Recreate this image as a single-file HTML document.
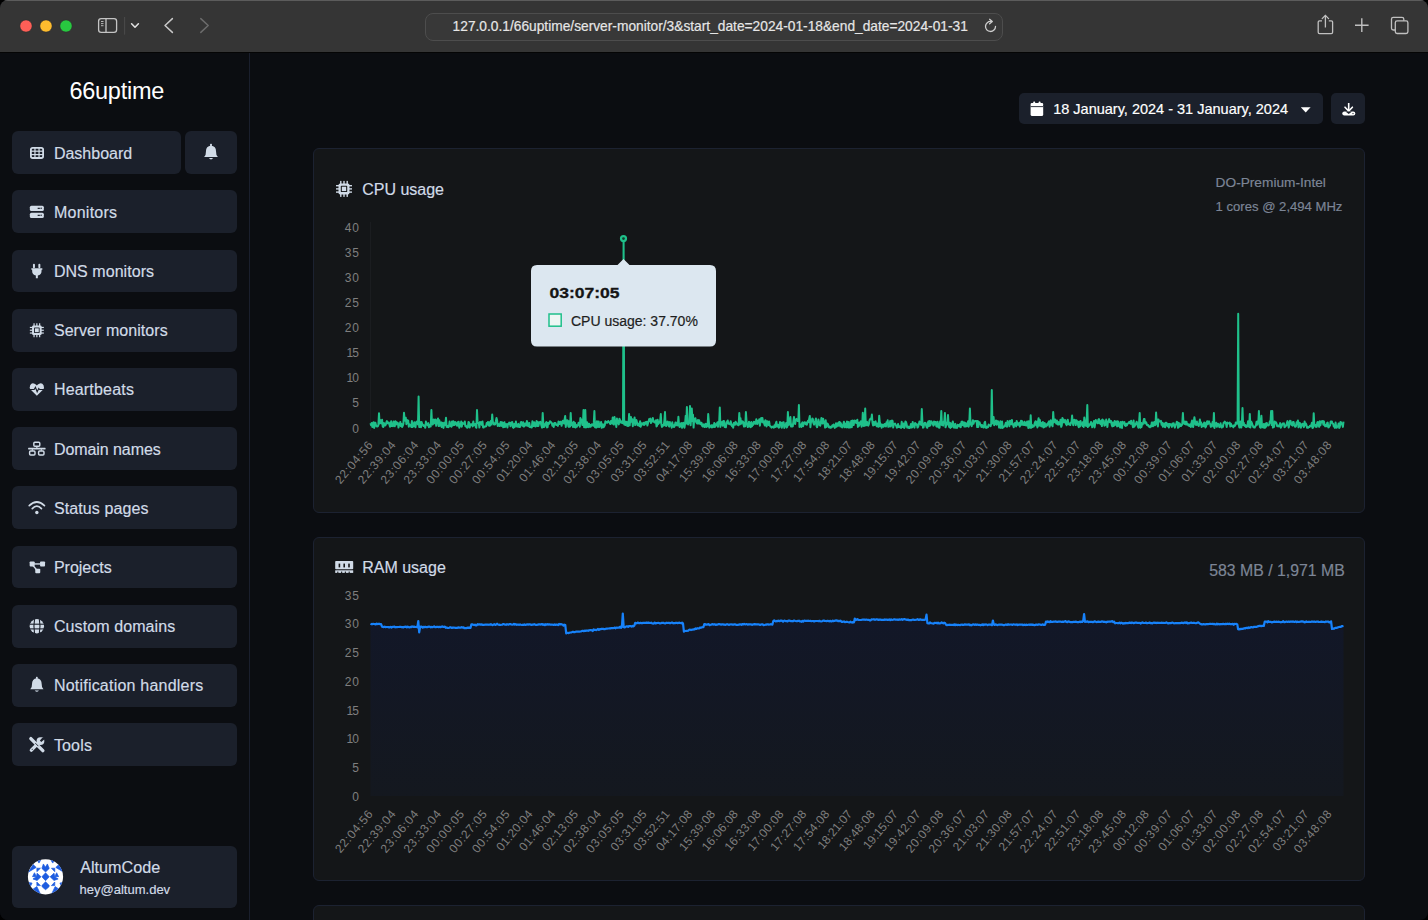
<!DOCTYPE html>
<html><head><meta charset="utf-8"><style>
*{margin:0;padding:0;box-sizing:border-box}
html,body{width:1428px;height:920px;overflow:hidden;background:#000}
body{font-family:"Liberation Sans", sans-serif;position:relative}
#win{position:absolute;left:0;top:0;width:1428px;height:920px;border-radius:8px;overflow:hidden;background:#0b0d11}
#tb{position:absolute;left:0;top:0;width:1428px;height:52px;background:#353535;border-top:1px solid #5c5c5c;border-bottom:1px solid #050505;height:53px}
#url{position:absolute;left:425px;top:12px;width:578px;height:28px;border:1px solid #4d4d4d;border-radius:8px;background:#383838}
#url span{position:absolute;left:28px;top:5px;font-size:13.75px;color:#e6e6e6;white-space:nowrap;letter-spacing:0px}
#sb{position:absolute;left:0;top:53px;width:250px;height:867px;border-right:1px solid #1a1f2d;background:#0b0d11}
.logo{position:absolute;left:69px;top:75px;font-size:22.6px;color:#fff;white-space:nowrap;letter-spacing:0px}
.nav{position:absolute;left:12px;height:42.75px;background:#1b202b;border-radius:6px}
.nt{position:absolute;left:42.5px;top:12.3px;font-size:16px;color:#d1dbe7;white-space:nowrap}
.card{position:absolute;left:313px;width:1052px;background:#141618;border:1px solid #1c2231;border-radius:6px}
.ttl{position:absolute;font-size:16px;color:#d1dbe7;white-space:nowrap}
.info{position:absolute;font-size:13.3px;color:#7c8596;white-space:nowrap}
.btn{position:absolute;top:93px;height:31px;background:#1b202b;border-radius:5px}
svg{position:absolute;left:0;top:0}
</style></head><body>
<div id="win">
<div id="tb"><div id="url"></div></div>
<div id="sb"></div>
<div class="nav" style="top:131.25px;width:169px"></div>
<div class="nav" style="top:131.25px;left:185px;width:52px"></div>
<div class="nav" style="top:190.45px;width:225px"></div>
<div class="nav" style="top:249.65px;width:225px"></div>
<div class="nav" style="top:308.85px;width:225px"></div>
<div class="nav" style="top:368.05px;width:225px"></div>
<div class="nav" style="top:427.25px;width:225px"></div>
<div class="nav" style="top:486.45px;width:225px"></div>
<div class="nav" style="top:545.65px;width:225px"></div>
<div class="nav" style="top:604.85px;width:225px"></div>
<div class="nav" style="top:664.05px;width:225px"></div>
<div class="nav" style="top:723.25px;width:225px"></div>

<div class="nav" style="top:846px;height:62px;width:225px"></div>
<div class="btn" style="left:1019px;width:304px"></div>
<div class="btn" style="left:1331px;width:34px"></div>
<div class="card" style="top:148px;height:365px"></div>
<div class="card" style="top:537px;height:344px"></div>
<div class="card" style="top:905px;height:100px"></div>

<svg width="1428" height="920" viewBox="0 0 1428 920">
<!-- traffic lights -->
<circle cx="26" cy="26" r="6.1" fill="#fe5f57" stroke="#2a2a2a" stroke-width="0.5"/><circle cx="46" cy="26" r="6.1" fill="#febc2e" stroke="#2a2a2a" stroke-width="0.5"/><circle cx="66" cy="26" r="6.1" fill="#28c840" stroke="#2a2a2a" stroke-width="0.5"/>
<!-- sidebar toggle -->
<rect x="98.6" y="18.6" width="18" height="13.8" rx="2.6" fill="none" stroke="#c4c4c4" stroke-width="1.3"/>
<line x1="106" y1="18.6" x2="106" y2="32.4" stroke="#c4c4c4" stroke-width="1.3"/>
<line x1="101" y1="21.5" x2="103.5" y2="21.5" stroke="#c4c4c4" stroke-width="0.9"/>
<line x1="101" y1="23.6" x2="103.5" y2="23.6" stroke="#c4c4c4" stroke-width="0.9"/>
<line x1="101" y1="25.7" x2="103.5" y2="25.7" stroke="#c4c4c4" stroke-width="0.9"/>
<line x1="124.6" y1="17" x2="124.6" y2="34.7" stroke="#4a4a4a" stroke-width="1"/>
<path d="M131.6 23.8 L135 27.2 L138.4 23.8" fill="none" stroke="#e0e0e0" stroke-width="1.6" stroke-linecap="round" stroke-linejoin="round"/>
<path d="M172.4 18.6 L165 25.5 L172.4 32.4" fill="none" stroke="#c8c8c8" stroke-width="1.5" stroke-linecap="round" stroke-linejoin="round"/>
<path d="M200.8 18.6 L208.2 25.5 L200.8 32.4" fill="none" stroke="#6b6b6b" stroke-width="1.5" stroke-linecap="round" stroke-linejoin="round"/>
<!-- reload -->
<path d="M995.5 26.5 A5 5 0 1 1 991 21.5" fill="none" stroke="#cfcfcf" stroke-width="1.3" stroke-linecap="round"/>
<path d="M989.6 19.3 L992.3 21.5 L989.6 23.8" fill="none" stroke="#cfcfcf" stroke-width="1.3" stroke-linecap="round" stroke-linejoin="round"/>
<!-- share -->
<path d="M1322 20.8 H1319.5 Q1318.2 20.8 1318.2 22.1 V32.3 Q1318.2 33.6 1319.5 33.6 H1331.3 Q1332.6 33.6 1332.6 32.3 V22.1 Q1332.6 20.8 1331.3 20.8 H1328.8" fill="none" stroke="#c0c0c0" stroke-width="1.3"/>
<line x1="1325.4" y1="15.6" x2="1325.4" y2="27.6" stroke="#c0c0c0" stroke-width="1.3"/>
<path d="M1322.2 18.6 L1325.4 15.4 L1328.6 18.6" fill="none" stroke="#c0c0c0" stroke-width="1.3" stroke-linecap="round"/>
<!-- plus -->
<line x1="1355" y1="25.2" x2="1368.6" y2="25.2" stroke="#c0c0c0" stroke-width="1.4"/>
<line x1="1361.8" y1="18.2" x2="1361.8" y2="32" stroke="#c0c0c0" stroke-width="1.4"/>
<!-- tabs -->
<path d="M1395.3 30 H1393.3 Q1391.5 30 1391.5 28.2 V19 Q1391.5 17.3 1393.3 17.3 H1402 Q1403.8 17.3 1403.8 19 V20.8" fill="none" stroke="#c0c0c0" stroke-width="1.3"/>
<rect x="1395.3" y="20.9" width="12.6" height="12.6" rx="1.8" fill="none" stroke="#c0c0c0" stroke-width="1.3"/>

<!-- sidebar icons -->
<rect x="30.9" y="147.8" width="12.2" height="10.2" rx="1.8" fill="none" stroke="#d1dbe7" stroke-width="1.8"/><rect x="34.37" y="147.9" width="1.2" height="10" fill="#d1dbe7"/><rect x="31" y="150.60000000000002" width="12" height="1.2" fill="#d1dbe7"/><rect x="38.44" y="147.9" width="1.2" height="10" fill="#d1dbe7"/><rect x="31" y="154.00000000000003" width="12" height="1.2" fill="#d1dbe7"/>
<path d="M204.1 156.97 Q206.17 154.9 205.94 151.45 Q205.94 146.16 211 145.47 Q216.06 146.16 216.06 151.45 Q215.83 154.9 217.9 156.97 Z" fill="#d1dbe7"/><rect x="210.08" y="143.85999999999999" width="1.8399999999999999" height="2.3" rx="0.69" fill="#d1dbe7"/><path d="M208.815 158.12 Q211 161.10999999999999 213.185 158.12 Z" fill="#d1dbe7"/>
<rect x="29.85" y="205.65" width="14" height="5.4" rx="1.6" fill="#d1dbe7"/><rect x="29.85" y="212.65" width="14" height="5.4" rx="1.6" fill="#d1dbe7"/><circle cx="41.150000000000006" cy="208.35" r="0.75" fill="#1b202b"/><rect x="37.65" y="207.75" width="2.2" height="1.2" fill="#1b202b"/><circle cx="41.150000000000006" cy="215.35" r="0.75" fill="#1b202b"/><rect x="37.65" y="214.75" width="2.2" height="1.2" fill="#1b202b"/><rect x="32.95" y="263.85" width="2" height="4.5" rx="1" fill="#d1dbe7"/><rect x="38.35" y="263.85" width="2" height="4.5" rx="1" fill="#d1dbe7"/><path d="M31.35 268.15000000000003 H42.35 V269.75 H41.55 V271.05 Q41.55 274.85 37.85 275.45000000000005 V278.35 H35.85 V275.45000000000005 Q32.15 274.85 32.15 271.05 V269.75 H31.35 Z" fill="#d1dbe7"/><rect x="32.050000000000004" y="325.45" width="9.6" height="9.6" rx="1.4" fill="#d1dbe7"/><rect x="34.050000000000004" y="327.45" width="5.6" height="5.6" rx="0.6" fill="#1b202b"/><rect x="34.95" y="328.35" width="3.8" height="3.8" fill="#d1dbe7"/><rect x="33.45" y="323.25" width="1.2" height="14.0" fill="#d1dbe7"/><rect x="29.85" y="326.85" width="14.0" height="1.2" fill="#d1dbe7"/><rect x="36.25" y="323.25" width="1.2" height="14.0" fill="#d1dbe7"/><rect x="29.85" y="329.65" width="14.0" height="1.2" fill="#d1dbe7"/><rect x="39.050000000000004" y="323.25" width="1.2" height="14.0" fill="#d1dbe7"/><rect x="29.85" y="332.45" width="14.0" height="1.2" fill="#d1dbe7"/><rect x="34.050000000000004" y="327.45" width="5.6" height="5.6" rx="0.6" fill="#1b202b"/><rect x="34.95" y="328.35" width="3.8" height="3.8" fill="#d1dbe7"/><path d="M36.85 395.75 L30.75 389.75 Q28.95 387.65 30.150000000000002 385.15 Q31.75 382.54999999999995 34.55 383.75 Q35.95 384.34999999999997 36.85 385.54999999999995 Q37.75 384.34999999999997 39.15 383.75 Q41.95 382.54999999999995 43.55 385.15 Q44.75 387.65 42.95 389.75 Z" fill="#d1dbe7"/><path d="M29.55 389.54999999999995 H34.15 L35.45 387.34999999999997 L37.15 391.75 L38.75 388.45 L39.65 389.54999999999995 H44.55" fill="none" stroke="#1b202b" stroke-width="1.1" stroke-linejoin="miter"/><rect x="33.83" y="442.27" width="5.95" height="4.05" rx="1" fill="none" stroke="#d1dbe7" stroke-width="1.45"/><rect x="29.63" y="451.07" width="5.35" height="3.95" rx="1" fill="none" stroke="#d1dbe7" stroke-width="1.45"/><rect x="38.62" y="451.07" width="5.35" height="3.95" rx="1" fill="none" stroke="#d1dbe7" stroke-width="1.45"/><rect x="28.1" y="447.79999999999995" width="17.5" height="1.7" rx="0.4" fill="#d1dbe7"/><rect x="36.25" y="446.65" width="1.2" height="1.5" fill="#d1dbe7"/><rect x="31.75" y="449.15" width="1.2" height="1.5" fill="#d1dbe7"/><rect x="40.75" y="449.15" width="1.2" height="1.5" fill="#d1dbe7"/><path d="M29.25 505.55 Q36.85 498.45000000000005 44.45 505.55" fill="none" stroke="#d1dbe7" stroke-width="1.7" stroke-linecap="round"/><path d="M32.25 508.55 Q36.85 503.65000000000003 41.45 508.55" fill="none" stroke="#d1dbe7" stroke-width="1.7" stroke-linecap="round"/><circle cx="36.85" cy="512.45" r="1.7" fill="#d1dbe7"/><rect x="29.650000000000002" y="561.45" width="5" height="5" rx="0.9" fill="#d1dbe7"/><rect x="40.05" y="561.45" width="5" height="5" rx="0.9" fill="#d1dbe7"/><rect x="35.25" y="568.65" width="5" height="4.6" rx="0.9" fill="#d1dbe7"/><rect x="33.85" y="563.25" width="7" height="1.4" fill="#d1dbe7"/><path d="M33.050000000000004 565.45 L36.45 569.65" stroke="#d1dbe7" stroke-width="1.4"/><circle cx="36.85" cy="626.25" r="7.2" fill="#d1dbe7"/><rect x="29.35" y="623.65" width="15" height="1.1" fill="#1b202b"/><rect x="29.35" y="628.35" width="15" height="1.1" fill="#1b202b"/><path d="M34.550000000000004 619.05 Q33.25 626.25 34.550000000000004 633.45" fill="none" stroke="#1b202b" stroke-width="1.1"/><path d="M39.35 619.05 Q40.65 626.25 39.35 633.45" fill="none" stroke="#1b202b" stroke-width="1.1"/><path d="M30.25 689.33 Q32.230000000000004 687.3500000000001 32.01 684.0500000000001 Q32.01 678.9900000000001 36.85 678.33 Q41.690000000000005 678.9900000000001 41.690000000000005 684.0500000000001 Q41.47 687.3500000000001 43.45 689.33 Z" fill="#d1dbe7"/><rect x="35.97" y="676.7900000000001" width="1.7600000000000002" height="2.2" rx="0.66" fill="#d1dbe7"/><path d="M34.760000000000005 690.4300000000001 Q36.85 693.2900000000001 38.94 690.4300000000001 Z" fill="#d1dbe7"/><path d="M30.85 738.65 L42.85 750.65" stroke="#d1dbe7" stroke-width="3.4" stroke-linecap="round"/><path d="M42.35 739.15 L31.35 750.15" stroke="#d1dbe7" stroke-width="3.4" stroke-linecap="round"/><circle cx="40.45" cy="741.05" r="3.9" fill="#d1dbe7"/><path d="M39.85 740.4499999999999 L43.050000000000004 737.05 L44.85 739.05 L41.25 742.05 Z" fill="#1b202b"/><path d="M35.35 743.15 L38.35 746.15" stroke="#1b202b" stroke-width="0.9"/><circle cx="32.25" cy="749.25" r="0.6" fill="#1b202b"/>
<defs><clipPath id="av"><circle cx="45.5" cy="876.8" r="17.6"/></clipPath></defs><circle cx="45.5" cy="876.8" r="17.6" fill="#ffffff"/><g clip-path="url(#av)" fill="#1d5ce0" stroke="#1d5ce0" stroke-width="0.7" stroke-linejoin="round"><polygon points="45.57,872.87 49.26,876.78 45.57,880.70 41.87,876.78"/><polygon points="41.87,868.39 43.39,863.96 45.35,867.22 47.39,863.96 49.26,868.39 45.57,872.00"/><polygon points="45.57,881.87 49.26,885.48 48.83,887.00 45.57,889.70 42.30,887.00 41.87,885.48"/><polygon points="37.09,873.17 41.00,876.78 37.09,880.48 32.96,878.96 36.43,876.78"/><polygon points="34.48,872.74 36.43,876.65 32.52,876.65"/><polygon points="54.04,873.17 50.13,876.78 54.04,880.48 58.17,878.96 54.70,876.78"/><polygon points="56.65,872.74 54.70,876.65 58.61,876.65"/><polygon points="36.87,868.22 40.43,868.22 36.87,871.70"/><polygon points="51.43,868.22 54.78,868.22 54.78,871.70"/><polygon points="36.87,882.00 36.87,885.61 40.43,885.61"/><polygon points="54.78,882.00 54.78,885.61 51.43,885.61"/><polygon points="37.39,860.26 40.57,860.26 38.96,863.09"/><polygon points="51.00,860.26 54.35,860.26 52.74,863.09"/><polygon points="28.17,872.22 33.17,864.61 36.22,867.43"/><polygon points="63.83,872.22 58.83,864.61 55.78,867.43"/><polygon points="27.74,882.43 32.09,883.09 30.13,887.00"/><polygon points="64.26,882.43 59.91,883.09 61.87,887.00"/><polygon points="32.96,889.17 36.87,886.57 40.57,894.39"/><polygon points="59.04,889.17 55.13,886.57 51.43,894.39"/></g>

<!-- date button icons -->
<rect x="1030.6" y="104.3" width="12.6" height="11.8" rx="1.6" fill="#fff"/>
<rect x="1030.6" y="103" width="12.6" height="3" rx="1.2" fill="#fff"/>
<rect x="1033.3" y="101.6" width="1.8" height="3" rx="0.6" fill="#fff"/>
<rect x="1038.7" y="101.6" width="1.8" height="3" rx="0.6" fill="#fff"/>
<rect x="1030.6" y="106.2" width="12.6" height="0.9" fill="#1b202b"/>
<path d="M1300.8 107.2 H1310.6 L1305.7 112.6 Z" fill="#fff"/>
<!-- download -->
<line x1="1348.7" y1="103" x2="1348.7" y2="110.5" stroke="#fff" stroke-width="1.6"/>
<path d="M1345 107.2 L1348.7 111 L1352.4 107.2" fill="none" stroke="#fff" stroke-width="1.6" stroke-linecap="round"/>
<rect x="1342.3" y="111.6" width="13" height="4" rx="2" fill="#fff"/>
<path d="M1345.5 111.6 L1348.7 114 L1351.9 111.6 Z" fill="#1b202b"/>
<circle cx="1353" cy="113.6" r="0.7" fill="#1b202b"/>

<!-- CPU icon -->
<rect x="338.51428571428573" y="183.4142857142857" width="10.97142857142857" height="10.97142857142857" rx="1.5999999999999999" fill="#d1dbe7"/><rect x="340.8" y="185.70000000000002" width="6.3999999999999995" height="6.3999999999999995" rx="0.6857142857142856" fill="#141618"/><rect x="341.8285714285714" y="186.72857142857143" width="4.3428571428571425" height="4.3428571428571425" fill="#d1dbe7"/><rect x="340.1142857142857" y="180.9" width="1.3714285714285712" height="16.0" fill="#d1dbe7"/><rect x="336.0" y="185.01428571428573" width="16.0" height="1.3714285714285712" fill="#d1dbe7"/><rect x="343.3142857142857" y="180.9" width="1.3714285714285712" height="16.0" fill="#d1dbe7"/><rect x="336.0" y="188.21428571428572" width="16.0" height="1.3714285714285712" fill="#d1dbe7"/><rect x="346.51428571428573" y="180.9" width="1.3714285714285712" height="16.0" fill="#d1dbe7"/><rect x="336.0" y="191.4142857142857" width="16.0" height="1.3714285714285712" fill="#d1dbe7"/><rect x="340.8" y="185.70000000000002" width="6.3999999999999995" height="6.3999999999999995" rx="0.6857142857142856" fill="#141618"/><rect x="341.8285714285714" y="186.72857142857143" width="4.3428571428571425" height="4.3428571428571425" fill="#d1dbe7"/>
<!-- RAM icon -->
<g fill="#d1dbe7">
<rect x="335.2" y="561" width="18" height="8.2" rx="0.8"/>
<rect x="335.2" y="570.3" width="18" height="2.6"/>
</g>
<g fill="#141618">
<rect x="338.6" y="563.6" width="1.6" height="3.8"/><rect x="343.4" y="563.6" width="1.6" height="3.8"/><rect x="348.2" y="563.6" width="1.6" height="3.8"/>
<rect x="337.2" y="571.6" width="1.2" height="1.3"/><rect x="341" y="571.6" width="1.2" height="1.3"/><rect x="344.8" y="571.6" width="1.2" height="1.3"/><rect x="348.6" y="571.6" width="1.2" height="1.3"/>
</g>

<!-- CPU chart -->
<line x1="370.5" y1="222" x2="370.5" y2="431" stroke="#1b1d20" stroke-width="1"/>
<g font-family='"Liberation Sans", sans-serif' font-size="12" fill="#7f7f7f">
<text x="358.9" y="432.50" text-anchor="end">0</text><text x="358.9" y="407.40" text-anchor="end">5</text><text x="358.9" y="382.30" text-anchor="end" textLength="12.4" lengthAdjust="spacing">10</text><text x="358.9" y="357.20" text-anchor="end" textLength="12.4" lengthAdjust="spacing">15</text><text x="358.9" y="332.10" text-anchor="end" textLength="14.1" lengthAdjust="spacing">20</text><text x="358.9" y="307.00" text-anchor="end" textLength="14.1" lengthAdjust="spacing">25</text><text x="358.9" y="281.90" text-anchor="end" textLength="14.1" lengthAdjust="spacing">30</text><text x="358.9" y="256.80" text-anchor="end" textLength="14.1" lengthAdjust="spacing">35</text><text x="358.9" y="231.70" text-anchor="end" textLength="14.1" lengthAdjust="spacing">40</text>
<text x="373.40" y="445.40" transform="rotate(-50 373.40 445.40)" text-anchor="end" textLength="51.3" lengthAdjust="spacing">22:04:56</text><text x="396.23" y="445.40" transform="rotate(-50 396.23 445.40)" text-anchor="end" textLength="51.3" lengthAdjust="spacing">22:39:04</text><text x="419.06" y="445.40" transform="rotate(-50 419.06 445.40)" text-anchor="end" textLength="51.3" lengthAdjust="spacing">23:06:04</text><text x="441.89" y="445.40" transform="rotate(-50 441.89 445.40)" text-anchor="end" textLength="51.3" lengthAdjust="spacing">23:33:04</text><text x="464.72" y="445.40" transform="rotate(-50 464.72 445.40)" text-anchor="end" textLength="51.3" lengthAdjust="spacing">00:00:05</text><text x="487.55" y="445.40" transform="rotate(-50 487.55 445.40)" text-anchor="end" textLength="51.3" lengthAdjust="spacing">00:27:05</text><text x="510.38" y="445.40" transform="rotate(-50 510.38 445.40)" text-anchor="end" textLength="51.3" lengthAdjust="spacing">00:54:05</text><text x="533.21" y="445.40" transform="rotate(-50 533.21 445.40)" text-anchor="end" textLength="48.9" lengthAdjust="spacing">01:20:04</text><text x="556.04" y="445.40" transform="rotate(-50 556.04 445.40)" text-anchor="end" textLength="48.9" lengthAdjust="spacing">01:46:04</text><text x="578.87" y="445.40" transform="rotate(-50 578.87 445.40)" text-anchor="end" textLength="48.9" lengthAdjust="spacing">02:13:05</text><text x="601.70" y="445.40" transform="rotate(-50 601.70 445.40)" text-anchor="end" textLength="51.3" lengthAdjust="spacing">02:38:04</text><text x="624.53" y="445.40" transform="rotate(-50 624.53 445.40)" text-anchor="end" textLength="51.3" lengthAdjust="spacing">03:05:05</text><text x="647.36" y="445.40" transform="rotate(-50 647.36 445.40)" text-anchor="end" textLength="48.9" lengthAdjust="spacing">03:31:05</text><text x="670.19" y="445.40" transform="rotate(-50 670.19 445.40)" text-anchor="end" textLength="48.9" lengthAdjust="spacing">03:52:51</text><text x="693.02" y="445.40" transform="rotate(-50 693.02 445.40)" text-anchor="end" textLength="48.9" lengthAdjust="spacing">04:17:08</text><text x="715.85" y="445.40" transform="rotate(-50 715.85 445.40)" text-anchor="end" textLength="48.9" lengthAdjust="spacing">15:39:08</text><text x="738.68" y="445.40" transform="rotate(-50 738.68 445.40)" text-anchor="end" textLength="48.9" lengthAdjust="spacing">16:06:08</text><text x="761.51" y="445.40" transform="rotate(-50 761.51 445.40)" text-anchor="end" textLength="48.9" lengthAdjust="spacing">16:33:08</text><text x="784.34" y="445.40" transform="rotate(-50 784.34 445.40)" text-anchor="end" textLength="48.9" lengthAdjust="spacing">17:00:08</text><text x="807.17" y="445.40" transform="rotate(-50 807.17 445.40)" text-anchor="end" textLength="48.9" lengthAdjust="spacing">17:27:08</text><text x="830.00" y="445.40" transform="rotate(-50 830.00 445.40)" text-anchor="end" textLength="48.9" lengthAdjust="spacing">17:54:08</text><text x="852.83" y="445.40" transform="rotate(-50 852.83 445.40)" text-anchor="end" textLength="46.5" lengthAdjust="spacing">18:21:07</text><text x="875.66" y="445.40" transform="rotate(-50 875.66 445.40)" text-anchor="end" textLength="48.9" lengthAdjust="spacing">18:48:08</text><text x="898.49" y="445.40" transform="rotate(-50 898.49 445.40)" text-anchor="end" textLength="46.5" lengthAdjust="spacing">19:15:07</text><text x="921.32" y="445.40" transform="rotate(-50 921.32 445.40)" text-anchor="end" textLength="48.9" lengthAdjust="spacing">19:42:07</text><text x="944.15" y="445.40" transform="rotate(-50 944.15 445.40)" text-anchor="end" textLength="51.3" lengthAdjust="spacing">20:09:08</text><text x="966.98" y="445.40" transform="rotate(-50 966.98 445.40)" text-anchor="end" textLength="51.3" lengthAdjust="spacing">20:36:07</text><text x="989.81" y="445.40" transform="rotate(-50 989.81 445.40)" text-anchor="end" textLength="48.9" lengthAdjust="spacing">21:03:07</text><text x="1012.64" y="445.40" transform="rotate(-50 1012.64 445.40)" text-anchor="end" textLength="48.9" lengthAdjust="spacing">21:30:08</text><text x="1035.47" y="445.40" transform="rotate(-50 1035.47 445.40)" text-anchor="end" textLength="48.9" lengthAdjust="spacing">21:57:07</text><text x="1058.30" y="445.40" transform="rotate(-50 1058.30 445.40)" text-anchor="end" textLength="51.3" lengthAdjust="spacing">22:24:07</text><text x="1081.13" y="445.40" transform="rotate(-50 1081.13 445.40)" text-anchor="end" textLength="48.9" lengthAdjust="spacing">22:51:07</text><text x="1103.96" y="445.40" transform="rotate(-50 1103.96 445.40)" text-anchor="end" textLength="48.9" lengthAdjust="spacing">23:18:08</text><text x="1126.79" y="445.40" transform="rotate(-50 1126.79 445.40)" text-anchor="end" textLength="51.3" lengthAdjust="spacing">23:45:08</text><text x="1149.62" y="445.40" transform="rotate(-50 1149.62 445.40)" text-anchor="end" textLength="48.9" lengthAdjust="spacing">00:12:08</text><text x="1172.45" y="445.40" transform="rotate(-50 1172.45 445.40)" text-anchor="end" textLength="51.3" lengthAdjust="spacing">00:39:07</text><text x="1195.28" y="445.40" transform="rotate(-50 1195.28 445.40)" text-anchor="end" textLength="48.9" lengthAdjust="spacing">01:06:07</text><text x="1218.11" y="445.40" transform="rotate(-50 1218.11 445.40)" text-anchor="end" textLength="48.9" lengthAdjust="spacing">01:33:07</text><text x="1240.94" y="445.40" transform="rotate(-50 1240.94 445.40)" text-anchor="end" textLength="51.3" lengthAdjust="spacing">02:00:08</text><text x="1263.77" y="445.40" transform="rotate(-50 1263.77 445.40)" text-anchor="end" textLength="51.3" lengthAdjust="spacing">02:27:08</text><text x="1286.60" y="445.40" transform="rotate(-50 1286.60 445.40)" text-anchor="end" textLength="51.3" lengthAdjust="spacing">02:54:07</text><text x="1309.43" y="445.40" transform="rotate(-50 1309.43 445.40)" text-anchor="end" textLength="48.9" lengthAdjust="spacing">03:21:07</text><text x="1332.26" y="445.40" transform="rotate(-50 1332.26 445.40)" text-anchor="end" textLength="51.3" lengthAdjust="spacing">03:48:08</text>
</g>
<path d="M370.5 423.2 L371.1 425.2 L371.7 423.0 L372.3 426.9 L372.9 426.4 L373.5 422.2 L374.2 427.9 L374.8 422.7 L375.4 422.8 L376.0 425.3 L376.6 426.4 L377.2 426.6 L377.8 426.4 L378.4 424.9 L379.0 413.3 L379.6 423.5 L380.2 420.1 L380.8 421.1 L381.5 423.6 L382.1 419.8 L382.7 426.3 L383.3 427.0 L383.9 422.9 L384.5 425.6 L385.1 425.5 L385.7 424.9 L386.3 422.5 L386.9 421.1 L387.5 423.3 L388.1 422.6 L388.8 422.4 L389.4 424.4 L390.0 426.8 L390.6 425.6 L391.2 421.2 L391.8 426.1 L392.4 424.0 L393.0 426.2 L393.6 421.6 L394.2 425.7 L394.8 426.1 L395.4 421.2 L396.1 424.4 L396.7 422.2 L397.3 423.8 L397.9 423.1 L398.5 427.5 L399.1 424.8 L399.7 424.9 L400.3 422.0 L400.9 426.0 L401.5 423.9 L402.1 427.1 L402.8 425.6 L403.4 423.6 L404.0 412.8 L404.6 418.8 L405.2 420.6 L405.8 417.8 L406.4 424.2 L407.0 420.1 L407.6 421.1 L408.2 420.6 L408.8 426.7 L409.4 424.1 L410.1 425.4 L410.7 425.2 L411.3 427.0 L411.9 421.0 L412.5 427.0 L413.1 423.6 L413.7 426.2 L414.3 422.2 L414.9 423.5 L415.5 427.3 L416.1 422.3 L416.7 421.6 L417.4 422.0 L418.0 424.6 L418.6 396.6 L419.2 427.1 L419.8 421.8 L420.4 424.7 L421.0 427.2 L421.6 422.1 L422.2 424.1 L422.8 424.5 L423.4 425.9 L424.0 425.4 L424.7 426.6 L425.3 427.7 L425.9 421.6 L426.5 424.6 L427.1 424.1 L427.7 425.3 L428.3 423.1 L428.9 427.2 L429.5 424.9 L430.1 426.5 L430.7 426.5 L431.4 410.1 L432.0 423.4 L432.6 424.5 L433.2 423.6 L433.8 419.5 L434.4 423.3 L435.0 421.5 L435.6 419.6 L436.2 425.8 L436.8 420.8 L437.4 420.7 L438.0 418.5 L438.7 426.1 L439.3 420.2 L439.9 425.7 L440.5 423.1 L441.1 422.3 L441.7 427.0 L442.3 425.4 L442.9 422.7 L443.5 427.9 L444.1 424.2 L444.7 422.9 L445.3 425.0 L446.0 417.7 L446.6 426.9 L447.2 427.1 L447.8 426.0 L448.4 427.2 L449.0 426.2 L449.6 421.6 L450.2 424.6 L450.8 426.2 L451.4 426.6 L452.0 421.6 L452.6 425.5 L453.3 421.3 L453.9 425.0 L454.5 424.9 L455.1 422.0 L455.7 423.3 L456.3 424.5 L456.9 425.6 L457.5 422.2 L458.1 425.7 L458.7 421.8 L459.3 427.7 L460.0 425.6 L460.6 425.0 L461.2 421.6 L461.8 426.7 L462.4 422.8 L463.0 423.8 L463.6 423.5 L464.2 424.1 L464.8 421.4 L465.4 426.2 L466.0 425.8 L466.6 427.0 L467.3 427.8 L467.9 427.0 L468.5 421.9 L469.1 422.5 L469.7 427.5 L470.3 424.3 L470.9 425.2 L471.5 424.4 L472.1 423.9 L472.7 426.4 L473.3 421.5 L473.9 425.3 L474.6 424.2 L475.2 424.1 L475.8 427.1 L476.4 427.7 L477.0 410.1 L477.6 423.1 L478.2 422.7 L478.8 423.4 L479.4 427.5 L480.0 421.9 L480.6 422.8 L481.2 422.2 L481.9 424.9 L482.5 421.5 L483.1 427.5 L483.7 427.6 L484.3 426.5 L484.9 426.5 L485.5 426.6 L486.1 426.4 L486.7 423.0 L487.3 424.3 L487.9 422.0 L488.6 425.5 L489.2 422.2 L489.8 425.8 L490.4 424.5 L491.0 420.7 L491.6 424.6 L492.2 414.6 L492.8 421.9 L493.4 422.5 L494.0 424.6 L494.6 424.4 L495.2 424.4 L495.9 421.2 L496.5 417.9 L497.1 420.3 L497.7 426.0 L498.3 423.9 L498.9 424.8 L499.5 426.0 L500.1 423.9 L500.7 421.9 L501.3 425.9 L501.9 422.2 L502.5 422.8 L503.2 427.3 L503.8 423.1 L504.4 422.2 L505.0 427.1 L505.6 424.6 L506.2 424.1 L506.8 424.3 L507.4 427.6 L508.0 423.9 L508.6 424.1 L509.2 422.6 L509.8 422.8 L510.5 426.3 L511.1 423.4 L511.7 422.3 L512.3 422.1 L512.9 427.3 L513.5 427.9 L514.1 424.0 L514.7 427.0 L515.3 424.6 L515.9 421.6 L516.5 425.9 L517.1 426.7 L517.8 425.4 L518.4 423.9 L519.0 427.1 L519.6 425.2 L520.2 426.9 L520.8 422.2 L521.4 422.1 L522.0 424.7 L522.6 425.6 L523.2 422.3 L523.8 426.6 L524.5 426.1 L525.1 423.5 L525.7 423.7 L526.3 425.5 L526.9 421.0 L527.5 422.9 L528.1 426.0 L528.7 426.3 L529.3 422.9 L529.9 427.0 L530.5 426.7 L531.1 427.3 L531.8 427.5 L532.4 421.3 L533.0 426.0 L533.6 426.1 L534.2 422.2 L534.8 424.0 L535.4 426.6 L536.0 424.9 L536.6 421.0 L537.2 425.9 L537.8 422.1 L538.4 426.1 L539.1 423.0 L539.7 422.2 L540.3 421.9 L540.9 423.4 L541.5 425.9 L542.1 427.6 L542.7 413.1 L543.3 423.2 L543.9 427.1 L544.5 426.7 L545.1 424.8 L545.7 423.2 L546.4 422.0 L547.0 427.4 L547.6 427.1 L548.2 422.8 L548.8 424.0 L549.4 423.4 L550.0 421.2 L550.6 421.7 L551.2 422.5 L551.8 423.0 L552.4 425.8 L553.1 424.1 L553.7 427.1 L554.3 423.1 L554.9 423.2 L555.5 423.0 L556.1 424.9 L556.7 425.0 L557.3 424.5 L557.9 425.9 L558.5 421.4 L559.1 422.9 L559.7 423.9 L560.4 421.7 L561.0 422.4 L561.6 425.8 L562.2 422.1 L562.8 420.7 L563.4 420.9 L564.0 423.5 L564.6 419.4 L565.2 416.0 L565.8 426.9 L566.4 421.8 L567.0 420.2 L567.7 420.6 L568.3 426.1 L568.9 426.9 L569.5 421.0 L570.1 426.5 L570.7 413.1 L571.3 424.2 L571.9 425.3 L572.5 422.8 L573.1 427.0 L573.7 421.8 L574.3 426.9 L575.0 422.9 L575.6 427.5 L576.2 424.9 L576.8 426.8 L577.4 425.3 L578.0 425.0 L578.6 422.7 L579.2 423.3 L579.8 426.7 L580.4 418.1 L581.0 419.5 L581.7 420.2 L582.3 424.9 L582.9 424.8 L583.5 410.1 L584.1 427.3 L584.7 426.9 L585.3 410.1 L585.9 427.4 L586.5 427.2 L587.1 422.3 L587.7 425.2 L588.3 427.1 L589.0 423.8 L589.6 426.7 L590.2 424.9 L590.8 426.6 L591.4 425.0 L592.0 424.2 L592.6 424.8 L593.2 425.8 L593.8 422.9 L594.4 411.1 L595.0 427.2 L595.6 427.4 L596.3 427.5 L596.9 421.3 L597.5 421.7 L598.1 426.9 L598.7 421.4 L599.3 427.0 L599.9 425.1 L600.5 425.1 L601.1 421.9 L601.7 427.8 L602.3 426.3 L602.9 424.3 L603.6 427.3 L604.2 426.2 L604.8 425.2 L605.4 421.2 L606.0 422.7 L606.6 422.2 L607.2 422.6 L607.8 421.4 L608.4 421.1 L609.0 422.4 L609.6 422.7 L610.3 424.0 L610.9 421.1 L611.5 423.0 L612.1 423.4 L612.7 417.6 L613.3 424.1 L613.9 424.6 L614.5 417.1 L615.1 422.6 L615.7 421.3 L616.3 426.9 L616.9 418.5 L617.6 422.6 L618.2 422.0 L618.8 424.4 L619.4 418.8 L620.0 420.0 L620.6 422.5 L621.2 421.4 L621.8 422.9 L622.4 423.2 L623.0 422.4 L623.6 238.9 L624.2 424.6 L624.9 421.3 L625.5 425.0 L626.1 423.1 L626.7 421.7 L627.3 425.9 L627.9 423.0 L628.5 425.9 L629.1 414.0 L629.7 425.3 L630.3 419.8 L630.9 416.9 L631.5 421.8 L632.2 419.2 L632.8 426.2 L633.4 420.5 L634.0 420.4 L634.6 417.5 L635.2 425.1 L635.8 420.4 L636.4 420.1 L637.0 422.4 L637.6 425.3 L638.2 423.6 L638.9 424.7 L639.5 426.0 L640.1 421.2 L640.7 426.8 L641.3 424.8 L641.9 423.2 L642.5 423.4 L643.1 424.7 L643.7 422.8 L644.3 424.9 L644.9 424.1 L645.5 422.1 L646.2 423.4 L646.8 421.8 L647.4 425.5 L648.0 423.2 L648.6 421.4 L649.2 419.1 L649.8 421.0 L650.4 418.6 L651.0 423.0 L651.6 420.7 L652.2 421.5 L652.8 418.0 L653.5 421.6 L654.1 422.0 L654.7 422.5 L655.3 421.2 L655.9 420.2 L656.5 426.4 L657.1 425.8 L657.7 419.8 L658.3 424.1 L658.9 421.7 L659.5 422.7 L660.1 421.2 L660.8 414.1 L661.4 424.4 L662.0 426.9 L662.6 425.1 L663.2 425.7 L663.8 425.3 L664.4 420.5 L665.0 412.1 L665.6 425.5 L666.2 426.0 L666.8 424.5 L667.5 421.6 L668.1 422.1 L668.7 425.9 L669.3 426.6 L669.9 422.1 L670.5 425.1 L671.1 423.7 L671.7 427.7 L672.3 422.3 L672.9 426.4 L673.5 425.1 L674.1 427.1 L674.8 425.7 L675.4 422.6 L676.0 422.6 L676.6 425.3 L677.2 423.1 L677.8 425.4 L678.4 416.7 L679.0 424.8 L679.6 427.0 L680.2 426.3 L680.8 423.6 L681.4 423.1 L682.1 427.8 L682.7 423.4 L683.3 422.7 L683.9 425.5 L684.5 427.7 L685.1 423.7 L685.7 415.8 L686.3 423.4 L686.9 407.1 L687.5 422.2 L688.1 424.5 L688.7 422.8 L689.4 422.0 L690.0 406.1 L690.6 425.3 L691.2 417.1 L691.8 408.6 L692.4 420.9 L693.0 414.8 L693.6 427.6 L694.2 418.7 L694.8 420.1 L695.4 418.3 L696.1 422.0 L696.7 422.8 L697.3 423.5 L697.9 420.1 L698.5 423.5 L699.1 420.2 L699.7 422.6 L700.3 424.2 L700.9 422.8 L701.5 422.8 L702.1 425.9 L702.7 426.5 L703.4 424.4 L704.0 425.1 L704.6 427.1 L705.2 424.3 L705.8 423.7 L706.4 427.0 L707.0 426.2 L707.6 426.3 L708.2 414.1 L708.8 421.4 L709.4 427.6 L710.0 426.4 L710.7 426.7 L711.3 425.2 L711.9 427.6 L712.5 425.3 L713.1 427.0 L713.7 426.6 L714.3 422.9 L714.9 427.1 L715.5 424.2 L716.1 425.5 L716.7 425.4 L717.3 422.4 L718.0 426.8 L718.6 421.7 L719.2 421.8 L719.8 407.6 L720.4 426.9 L721.0 423.4 L721.6 423.5 L722.2 421.9 L722.8 425.7 L723.4 421.1 L724.0 421.1 L724.7 426.9 L725.3 425.7 L725.9 427.3 L726.5 422.2 L727.1 421.9 L727.7 420.5 L728.3 423.7 L728.9 423.2 L729.5 423.7 L730.1 424.4 L730.7 421.3 L731.3 423.9 L732.0 426.1 L732.6 425.0 L733.2 427.7 L733.8 422.9 L734.4 423.1 L735.0 424.8 L735.6 421.8 L736.2 422.6 L736.8 423.5 L737.4 424.7 L738.0 423.8 L738.6 425.3 L739.3 413.1 L739.9 424.3 L740.5 418.3 L741.1 423.7 L741.7 421.1 L742.3 421.6 L742.9 421.5 L743.5 424.8 L744.1 426.6 L744.7 422.4 L745.3 426.3 L745.9 412.1 L746.6 422.6 L747.2 423.5 L747.8 427.0 L748.4 426.6 L749.0 421.7 L749.6 426.4 L750.2 423.0 L750.8 427.2 L751.4 421.9 L752.0 426.2 L752.6 423.4 L753.2 424.9 L753.9 421.8 L754.5 421.9 L755.1 423.8 L755.7 423.8 L756.3 419.3 L756.9 423.4 L757.5 423.9 L758.1 420.8 L758.7 422.0 L759.3 419.2 L759.9 425.7 L760.6 420.7 L761.2 418.0 L761.8 421.7 L762.4 417.9 L763.0 422.4 L763.6 421.3 L764.2 423.6 L764.8 425.5 L765.4 420.2 L766.0 421.5 L766.6 426.5 L767.2 421.3 L767.9 424.6 L768.5 425.0 L769.1 421.4 L769.7 425.0 L770.3 426.5 L770.9 426.4 L771.5 427.7 L772.1 426.9 L772.7 426.6 L773.3 427.2 L773.9 427.7 L774.5 425.3 L775.2 427.0 L775.8 423.3 L776.4 421.8 L777.0 426.6 L777.6 424.6 L778.2 425.1 L778.8 427.7 L779.4 427.4 L780.0 422.1 L780.6 425.3 L781.2 422.8 L781.8 427.7 L782.5 424.4 L783.1 422.3 L783.7 422.3 L784.3 427.9 L784.9 424.9 L785.5 426.0 L786.1 423.1 L786.7 427.5 L787.3 426.6 L787.9 412.1 L788.5 425.0 L789.2 424.6 L789.8 420.1 L790.4 416.9 L791.0 426.4 L791.6 424.4 L792.2 426.6 L792.8 426.4 L793.4 421.1 L794.0 417.0 L794.6 423.5 L795.2 423.9 L795.8 419.6 L796.5 418.9 L797.1 419.9 L797.7 421.0 L798.3 421.0 L798.9 405.1 L799.5 426.9 L800.1 424.3 L800.7 424.7 L801.3 427.0 L801.9 423.4 L802.5 422.3 L803.1 426.2 L803.8 423.1 L804.4 422.2 L805.0 422.5 L805.6 424.2 L806.2 422.6 L806.8 424.7 L807.4 423.1 L808.0 420.7 L808.6 422.0 L809.2 418.8 L809.8 415.9 L810.4 427.2 L811.1 420.9 L811.7 421.5 L812.3 418.4 L812.9 419.2 L813.5 423.4 L814.1 424.7 L814.7 423.0 L815.3 421.0 L815.9 418.4 L816.5 426.0 L817.1 427.2 L817.8 424.0 L818.4 419.6 L819.0 421.9 L819.6 425.0 L820.2 425.7 L820.8 422.9 L821.4 418.0 L822.0 418.7 L822.6 423.6 L823.2 418.8 L823.8 423.2 L824.4 421.6 L825.1 427.6 L825.7 420.3 L826.3 426.9 L826.9 424.6 L827.5 423.6 L828.1 424.5 L828.7 427.2 L829.3 427.4 L829.9 426.5 L830.5 427.8 L831.1 426.9 L831.7 427.4 L832.4 425.3 L833.0 426.1 L833.6 424.5 L834.2 426.6 L834.8 427.9 L835.4 426.2 L836.0 423.2 L836.6 426.7 L837.2 425.8 L837.8 423.2 L838.4 425.7 L839.0 422.1 L839.7 421.9 L840.3 426.4 L840.9 423.3 L841.5 426.7 L842.1 427.4 L842.7 425.5 L843.3 424.4 L843.9 421.7 L844.5 427.3 L845.1 423.5 L845.7 425.3 L846.4 427.4 L847.0 421.4 L847.6 423.6 L848.2 427.4 L848.8 422.0 L849.4 427.6 L850.0 427.6 L850.6 426.2 L851.2 420.9 L851.8 427.2 L852.4 420.6 L853.0 421.0 L853.7 425.0 L854.3 420.5 L854.9 421.8 L855.5 420.9 L856.1 423.1 L856.7 422.9 L857.3 419.7 L857.9 426.9 L858.5 422.7 L859.1 425.7 L859.7 423.0 L860.3 422.1 L861.0 421.2 L861.6 426.7 L862.2 425.4 L862.8 412.8 L863.4 421.6 L864.0 426.0 L864.6 421.7 L865.2 408.6 L865.8 425.5 L866.4 422.2 L867.0 421.8 L867.6 425.2 L868.3 425.6 L868.9 424.1 L869.5 420.5 L870.1 419.1 L870.7 418.5 L871.3 419.3 L871.9 414.6 L872.5 422.7 L873.1 425.6 L873.7 421.9 L874.3 425.0 L875.0 422.4 L875.6 421.3 L876.2 425.2 L876.8 426.3 L877.4 423.6 L878.0 426.5 L878.6 426.8 L879.2 415.8 L879.8 422.5 L880.4 426.0 L881.0 424.1 L881.6 427.7 L882.3 425.4 L882.9 424.5 L883.5 426.7 L884.1 426.1 L884.7 424.0 L885.3 424.1 L885.9 426.6 L886.5 422.2 L887.1 424.6 L887.7 420.3 L888.3 426.8 L888.9 426.7 L889.6 425.7 L890.2 421.0 L890.8 426.5 L891.4 423.9 L892.0 420.4 L892.6 420.9 L893.2 427.6 L893.8 424.3 L894.4 423.9 L895.0 423.6 L895.6 424.7 L896.2 425.6 L896.9 427.8 L897.5 426.9 L898.1 423.9 L898.7 427.1 L899.3 426.9 L899.9 426.2 L900.5 427.6 L901.1 427.9 L901.7 421.8 L902.3 425.6 L902.9 427.0 L903.6 423.5 L904.2 427.9 L904.8 426.8 L905.4 421.5 L906.0 422.0 L906.6 424.1 L907.2 427.6 L907.8 426.3 L908.4 427.9 L909.0 426.9 L909.6 427.9 L910.2 427.4 L910.9 424.1 L911.5 427.6 L912.1 427.3 L912.7 422.0 L913.3 426.2 L913.9 426.2 L914.5 427.6 L915.1 422.9 L915.7 423.8 L916.3 424.8 L916.9 424.2 L917.5 427.6 L918.2 426.7 L918.8 424.5 L919.4 421.6 L920.0 422.7 L920.6 424.1 L921.2 425.0 L921.8 409.1 L922.4 422.1 L923.0 427.7 L923.6 427.4 L924.2 423.7 L924.8 422.7 L925.5 422.9 L926.1 425.4 L926.7 427.2 L927.3 427.8 L927.9 422.4 L928.5 421.3 L929.1 426.1 L929.7 420.9 L930.3 425.6 L930.9 423.1 L931.5 421.4 L932.2 423.4 L932.8 424.0 L933.4 425.6 L934.0 421.6 L934.6 424.6 L935.2 422.0 L935.8 422.0 L936.4 426.3 L937.0 426.6 L937.6 421.7 L938.2 425.1 L938.8 427.6 L939.5 427.8 L940.1 421.3 L940.7 424.5 L941.3 411.1 L941.9 425.0 L942.5 425.1 L943.1 425.6 L943.7 421.6 L944.3 421.6 L944.9 412.9 L945.5 427.3 L946.1 425.7 L946.8 422.5 L947.4 424.2 L948.0 415.0 L948.6 424.5 L949.2 427.0 L949.8 422.7 L950.4 427.9 L951.0 423.6 L951.6 427.1 L952.2 425.3 L952.8 421.4 L953.4 424.8 L954.1 427.8 L954.7 425.6 L955.3 423.9 L955.9 427.8 L956.5 426.7 L957.1 427.9 L957.7 424.8 L958.3 425.9 L958.9 425.1 L959.5 426.5 L960.1 423.9 L960.8 427.2 L961.4 422.0 L962.0 421.5 L962.6 425.1 L963.2 425.3 L963.8 422.3 L964.4 426.5 L965.0 422.8 L965.6 426.5 L966.2 423.5 L966.8 426.2 L967.4 424.3 L968.1 421.3 L968.7 426.7 L969.3 422.6 L969.9 408.6 L970.5 424.3 L971.1 424.8 L971.7 426.1 L972.3 423.4 L972.9 420.2 L973.5 423.8 L974.1 421.2 L974.7 421.5 L975.4 421.0 L976.0 420.9 L976.6 421.2 L977.2 427.1 L977.8 421.1 L978.4 426.9 L979.0 422.3 L979.6 422.2 L980.2 424.2 L980.8 424.9 L981.4 427.0 L982.0 425.0 L982.7 426.5 L983.3 427.4 L983.9 427.4 L984.5 422.8 L985.1 421.8 L985.7 427.4 L986.3 427.9 L986.9 426.7 L987.5 427.4 L988.1 427.1 L988.7 424.5 L989.3 425.6 L990.0 425.5 L990.6 426.2 L991.2 423.7 L991.8 390.0 L992.4 423.6 L993.0 421.2 L993.6 417.0 L994.2 425.3 L994.8 422.7 L995.4 424.1 L996.0 420.4 L996.7 424.7 L997.3 423.3 L997.9 421.1 L998.5 423.3 L999.1 427.5 L999.7 427.4 L1000.3 421.3 L1000.9 427.9 L1001.5 426.4 L1002.1 421.5 L1002.7 427.9 L1003.3 427.2 L1004.0 426.6 L1004.6 426.5 L1005.2 424.7 L1005.8 422.8 L1006.4 426.1 L1007.0 426.7 L1007.6 420.9 L1008.2 422.4 L1008.8 422.6 L1009.4 426.2 L1010.0 420.8 L1010.6 422.9 L1011.3 424.3 L1011.9 420.0 L1012.5 424.6 L1013.1 424.9 L1013.7 427.2 L1014.3 424.1 L1014.9 423.0 L1015.5 423.3 L1016.1 426.4 L1016.7 420.9 L1017.3 423.2 L1017.9 424.8 L1018.6 424.6 L1019.2 422.9 L1019.8 426.5 L1020.4 423.2 L1021.0 420.7 L1021.6 424.8 L1022.2 421.2 L1022.8 424.8 L1023.4 423.8 L1024.0 425.0 L1024.6 421.8 L1025.3 425.2 L1025.9 423.0 L1026.5 425.6 L1027.1 421.4 L1027.7 421.6 L1028.3 427.9 L1028.9 421.2 L1029.5 424.3 L1030.1 427.7 L1030.7 415.3 L1031.3 427.8 L1031.9 424.7 L1032.6 427.1 L1033.2 426.0 L1033.8 426.4 L1034.4 424.4 L1035.0 422.4 L1035.6 421.2 L1036.2 425.4 L1036.8 422.1 L1037.4 427.5 L1038.0 421.7 L1038.6 418.2 L1039.2 425.7 L1039.9 420.1 L1040.5 423.1 L1041.1 426.3 L1041.7 422.9 L1042.3 426.5 L1042.9 422.0 L1043.5 427.5 L1044.1 427.1 L1044.7 423.1 L1045.3 425.1 L1045.9 426.5 L1046.5 424.2 L1047.2 425.4 L1047.8 423.9 L1048.4 422.4 L1049.0 421.4 L1049.6 426.7 L1050.2 423.4 L1050.8 420.3 L1051.4 424.7 L1052.0 422.9 L1052.6 426.3 L1053.2 412.1 L1053.9 422.4 L1054.5 421.5 L1055.1 419.5 L1055.7 422.1 L1056.3 423.5 L1056.9 420.4 L1057.5 424.3 L1058.1 424.5 L1058.7 422.1 L1059.3 424.4 L1059.9 424.1 L1060.5 419.7 L1061.2 426.8 L1061.8 425.4 L1062.4 418.0 L1063.0 422.5 L1063.6 419.6 L1064.2 421.0 L1064.8 422.5 L1065.4 420.1 L1066.0 424.1 L1066.6 425.1 L1067.2 423.2 L1067.8 419.8 L1068.5 424.1 L1069.1 424.5 L1069.7 423.6 L1070.3 425.0 L1070.9 422.5 L1071.5 422.3 L1072.1 415.6 L1072.7 422.7 L1073.3 425.3 L1073.9 420.3 L1074.5 419.7 L1075.1 420.2 L1075.8 425.1 L1076.4 420.3 L1077.0 423.0 L1077.6 421.5 L1078.2 425.6 L1078.8 427.2 L1079.4 421.8 L1080.0 426.4 L1080.6 421.1 L1081.2 424.0 L1081.8 423.6 L1082.5 426.0 L1083.1 421.9 L1083.7 426.9 L1084.3 417.5 L1084.9 422.0 L1085.5 425.1 L1086.1 426.0 L1086.7 419.8 L1087.3 405.1 L1087.9 427.1 L1088.5 423.9 L1089.1 425.7 L1089.8 425.1 L1090.4 424.0 L1091.0 421.9 L1091.6 422.8 L1092.2 427.3 L1092.8 425.3 L1093.4 425.2 L1094.0 420.9 L1094.6 427.4 L1095.2 423.5 L1095.8 420.0 L1096.4 422.5 L1097.1 422.2 L1097.7 423.3 L1098.3 419.8 L1098.9 419.0 L1099.5 423.2 L1100.1 421.2 L1100.7 424.3 L1101.3 420.4 L1101.9 426.1 L1102.5 419.5 L1103.1 421.3 L1103.7 420.6 L1104.4 425.7 L1105.0 425.4 L1105.6 424.2 L1106.2 419.6 L1106.8 422.7 L1107.4 427.0 L1108.0 421.5 L1108.6 421.6 L1109.2 419.1 L1109.8 422.3 L1110.4 421.1 L1111.1 421.0 L1111.7 424.9 L1112.3 426.4 L1112.9 422.5 L1113.5 426.1 L1114.1 425.5 L1114.7 421.0 L1115.3 424.2 L1115.9 424.9 L1116.5 421.4 L1117.1 426.5 L1117.7 421.2 L1118.4 421.9 L1119.0 426.0 L1119.6 426.3 L1120.2 427.4 L1120.8 421.9 L1121.4 427.1 L1122.0 427.9 L1122.6 421.8 L1123.2 423.5 L1123.8 423.0 L1124.4 422.0 L1125.0 425.5 L1125.7 426.0 L1126.3 423.7 L1126.9 425.4 L1127.5 423.8 L1128.1 423.3 L1128.7 423.0 L1129.3 421.8 L1129.9 423.3 L1130.5 423.8 L1131.1 420.8 L1131.7 423.7 L1132.3 423.6 L1133.0 427.2 L1133.6 420.6 L1134.2 426.8 L1134.8 425.7 L1135.4 424.8 L1136.0 423.5 L1136.6 421.7 L1137.2 423.3 L1137.8 426.1 L1138.4 427.7 L1139.0 423.6 L1139.7 413.1 L1140.3 427.8 L1140.9 422.7 L1141.5 427.0 L1142.1 423.2 L1142.7 424.4 L1143.3 422.2 L1143.9 419.1 L1144.5 419.0 L1145.1 423.4 L1145.7 422.0 L1146.3 422.6 L1147.0 425.0 L1147.6 425.2 L1148.2 425.1 L1148.8 426.6 L1149.4 426.8 L1150.0 427.3 L1150.6 425.5 L1151.2 426.5 L1151.8 422.5 L1152.4 422.4 L1153.0 426.2 L1153.6 424.2 L1154.3 421.9 L1154.9 425.3 L1155.5 424.7 L1156.1 412.6 L1156.7 423.8 L1157.3 419.5 L1157.9 426.4 L1158.5 419.4 L1159.1 421.5 L1159.7 421.3 L1160.3 421.6 L1160.9 420.8 L1161.6 424.8 L1162.2 422.8 L1162.8 426.7 L1163.4 424.0 L1164.0 423.4 L1164.6 426.8 L1165.2 427.2 L1165.8 422.8 L1166.4 422.7 L1167.0 423.9 L1167.6 426.3 L1168.3 423.9 L1168.9 427.6 L1169.5 423.9 L1170.1 424.5 L1170.7 424.2 L1171.3 425.5 L1171.9 426.9 L1172.5 423.4 L1173.1 425.4 L1173.7 423.3 L1174.3 426.0 L1174.9 427.6 L1175.6 424.8 L1176.2 424.2 L1176.8 421.8 L1177.4 422.1 L1178.0 427.8 L1178.6 423.0 L1179.2 426.7 L1179.8 423.6 L1180.4 425.9 L1181.0 426.0 L1181.6 424.8 L1182.2 424.8 L1182.9 413.1 L1183.5 423.2 L1184.1 421.4 L1184.7 424.0 L1185.3 421.6 L1185.9 424.5 L1186.5 421.7 L1187.1 424.5 L1187.7 423.9 L1188.3 425.5 L1188.9 424.6 L1189.5 426.0 L1190.2 424.3 L1190.8 427.0 L1191.4 423.3 L1192.0 420.6 L1192.6 425.7 L1193.2 427.0 L1193.8 422.1 L1194.4 417.2 L1195.0 421.1 L1195.6 424.7 L1196.2 424.9 L1196.9 421.6 L1197.5 424.8 L1198.1 423.8 L1198.7 426.0 L1199.3 423.0 L1199.9 419.6 L1200.5 424.4 L1201.1 422.5 L1201.7 427.1 L1202.3 424.2 L1202.9 425.4 L1203.5 426.2 L1204.2 422.4 L1204.8 423.2 L1205.4 427.4 L1206.0 426.5 L1206.6 422.7 L1207.2 421.2 L1207.8 424.3 L1208.4 422.2 L1209.0 421.3 L1209.6 423.3 L1210.2 424.0 L1210.8 426.9 L1211.5 426.0 L1212.1 424.2 L1212.7 421.8 L1213.3 426.4 L1213.9 413.1 L1214.5 427.9 L1215.1 423.6 L1215.7 425.5 L1216.3 422.8 L1216.9 426.8 L1217.5 423.9 L1218.1 423.8 L1218.8 425.4 L1219.4 427.1 L1220.0 425.8 L1220.6 423.3 L1221.2 427.1 L1221.8 427.6 L1222.4 425.4 L1223.0 426.8 L1223.6 422.8 L1224.2 422.7 L1224.8 421.6 L1225.4 422.5 L1226.1 424.0 L1226.7 427.1 L1227.3 422.6 L1227.9 423.4 L1228.5 423.2 L1229.1 423.6 L1229.7 422.6 L1230.3 426.5 L1230.9 423.8 L1231.5 425.0 L1232.1 426.2 L1232.8 426.3 L1233.4 427.3 L1234.0 425.2 L1234.6 426.0 L1235.2 425.6 L1235.8 422.4 L1236.4 423.8 L1237.0 423.8 L1237.6 421.3 L1238.2 313.7 L1238.8 425.0 L1239.4 427.6 L1240.1 425.8 L1240.7 421.6 L1241.3 427.6 L1241.9 423.2 L1242.5 408.1 L1243.1 425.0 L1243.7 422.8 L1244.3 425.5 L1244.9 426.1 L1245.5 425.1 L1246.1 427.1 L1246.7 426.4 L1247.4 426.4 L1248.0 421.3 L1248.6 426.2 L1249.2 426.9 L1249.8 413.9 L1250.4 427.4 L1251.0 421.5 L1251.6 422.4 L1252.2 424.0 L1252.8 425.6 L1253.4 427.1 L1254.0 427.5 L1254.7 427.6 L1255.3 426.1 L1255.9 425.7 L1256.5 421.8 L1257.1 424.8 L1257.7 421.3 L1258.3 423.4 L1258.9 411.1 L1259.5 424.7 L1260.1 427.3 L1260.7 427.8 L1261.4 415.7 L1262.0 426.2 L1262.6 427.1 L1263.2 427.6 L1263.8 424.0 L1264.4 425.4 L1265.0 427.9 L1265.6 423.5 L1266.2 426.7 L1266.8 423.0 L1267.4 425.2 L1268.0 424.8 L1268.7 425.4 L1269.3 423.8 L1269.9 421.3 L1270.5 422.8 L1271.1 411.1 L1271.7 425.1 L1272.3 411.1 L1272.9 427.6 L1273.5 427.1 L1274.1 426.8 L1274.7 421.5 L1275.3 423.3 L1276.0 422.4 L1276.6 423.6 L1277.2 426.3 L1277.8 425.9 L1278.4 425.5 L1279.0 426.5 L1279.6 425.6 L1280.2 423.1 L1280.8 427.7 L1281.4 426.6 L1282.0 425.1 L1282.6 423.6 L1283.3 423.6 L1283.9 423.3 L1284.5 427.2 L1285.1 426.9 L1285.7 425.2 L1286.3 425.7 L1286.9 422.8 L1287.5 421.1 L1288.1 422.8 L1288.7 427.6 L1289.3 425.2 L1290.0 420.8 L1290.6 420.9 L1291.2 423.9 L1291.8 425.1 L1292.4 425.6 L1293.0 422.0 L1293.6 422.1 L1294.2 424.6 L1294.8 426.5 L1295.4 426.7 L1296.0 426.2 L1296.6 422.2 L1297.3 423.3 L1297.9 420.4 L1298.5 427.3 L1299.1 425.7 L1299.7 422.8 L1300.3 423.9 L1300.9 427.7 L1301.5 425.8 L1302.1 424.1 L1302.7 423.7 L1303.3 425.4 L1303.9 427.1 L1304.6 421.5 L1305.2 425.3 L1305.8 423.5 L1306.4 424.8 L1307.0 427.7 L1307.6 426.8 L1308.2 427.7 L1308.8 427.1 L1309.4 427.0 L1310.0 425.7 L1310.6 426.3 L1311.2 426.0 L1311.9 422.7 L1312.5 427.9 L1313.1 427.6 L1313.7 413.3 L1314.3 424.9 L1314.9 425.5 L1315.5 426.6 L1316.1 424.8 L1316.7 426.9 L1317.3 422.3 L1317.9 422.0 L1318.6 425.3 L1319.2 426.8 L1319.8 421.2 L1320.4 425.2 L1321.0 422.3 L1321.6 421.2 L1322.2 422.2 L1322.8 421.0 L1323.4 424.7 L1324.0 421.6 L1324.6 424.8 L1325.2 426.3 L1325.9 425.1 L1326.5 426.2 L1327.1 423.1 L1327.7 422.6 L1328.3 427.4 L1328.9 427.2 L1329.5 425.9 L1330.1 425.4 L1330.7 421.5 L1331.3 421.7 L1331.9 421.5 L1332.5 423.4 L1333.2 423.8 L1333.8 426.6 L1334.4 426.0 L1335.0 427.9 L1335.6 422.6 L1336.2 426.6 L1336.8 427.7 L1337.4 426.3 L1338.0 426.3 L1338.6 423.4 L1339.2 427.9 L1339.8 426.9 L1340.5 422.0 L1341.1 422.4 L1341.7 424.2 L1342.3 424.7 L1342.9 426.9 L1343.5 421.7" fill="none" stroke="#1fc08a" stroke-width="2" stroke-linejoin="round"/>
<circle cx="623.5" cy="238.6" r="2.5" fill="#163a2c" stroke="#1fc08a" stroke-width="2.2"/>
<!-- tooltip -->
<path d="M537 265 H617.5 L623.5 259 L629.5 265 H710 Q716 265 716 271 V340.5 Q716 346.5 710 346.5 H537 Q531 346.5 531 340.5 V271 Q531 265 537 265 Z" fill="#dce7f0"/>
<text x="0" y="0" transform="translate(549.4 298.2) scale(1.17 1)" font-family='"Liberation Sans", sans-serif' font-size="15" font-weight="bold" fill="#151515" stroke="#151515" stroke-width="0.3">03:07:05</text>
<rect x="549" y="314" width="12.2" height="12.2" fill="#eef6f4" stroke="#1fc08a" stroke-width="1.5"/>
<text x="571" y="325.6" font-family='"Liberation Sans", sans-serif' font-size="14" fill="#1e1e1e" stroke="#1e1e1e" stroke-width="0.2">CPU usage: 37.70%</text>

<!-- RAM chart -->
<defs><linearGradient id="rg" x1="0" y1="615" x2="0" y2="796" gradientUnits="userSpaceOnUse"><stop offset="0" stop-color="#121728"/><stop offset="1" stop-color="#14181f"/></linearGradient></defs>
<path d="M370.5 623.6 L371.4 624.2 L372.3 624.1 L373.2 623.9 L374.0 624.0 L374.9 624.1 L375.8 624.4 L376.7 623.6 L377.6 624.1 L378.5 623.8 L379.4 623.8 L380.2 624.2 L381.1 624.1 L382.0 626.7 L382.9 626.9 L383.8 627.1 L384.7 626.6 L385.6 627.2 L386.4 627.0 L387.3 627.0 L388.2 627.1 L389.1 627.5 L390.0 627.0 L390.9 626.9 L391.7 627.5 L392.6 626.8 L393.5 626.8 L394.4 626.6 L395.3 627.3 L396.2 627.1 L397.1 627.1 L397.9 627.0 L398.8 627.0 L399.7 626.8 L400.6 626.8 L401.5 627.1 L402.4 627.0 L403.3 627.5 L404.1 626.8 L405.0 626.8 L405.9 626.7 L406.8 627.4 L407.7 626.6 L408.6 627.2 L409.5 627.4 L410.3 626.9 L411.2 627.2 L412.1 626.4 L413.0 626.9 L413.9 626.5 L414.8 627.0 L415.7 627.0 L416.5 626.8 L417.4 627.3 L418.3 621.0 L419.2 632.4 L420.1 626.8 L421.0 626.6 L421.9 626.9 L422.7 627.6 L423.6 626.8 L424.5 627.1 L425.4 626.8 L426.3 627.2 L427.2 627.1 L428.0 626.9 L428.9 626.5 L429.8 626.8 L430.7 627.3 L431.6 626.9 L432.5 627.2 L433.4 626.8 L434.2 626.4 L435.1 627.1 L436.0 627.1 L436.9 626.8 L437.8 626.9 L438.7 627.1 L439.6 626.8 L440.4 627.1 L441.3 626.9 L442.2 626.3 L443.1 626.9 L444.0 626.8 L444.9 626.7 L445.8 627.8 L446.6 627.5 L447.5 627.9 L448.4 628.0 L449.3 627.7 L450.2 627.2 L451.1 627.5 L452.0 628.0 L452.8 627.6 L453.7 627.5 L454.6 627.7 L455.5 627.8 L456.4 627.8 L457.3 627.9 L458.1 627.4 L459.0 627.6 L459.9 627.6 L460.8 627.7 L461.7 627.1 L462.6 627.6 L463.5 627.3 L464.3 628.1 L465.2 628.2 L466.1 628.2 L467.0 627.9 L467.9 627.6 L468.8 628.0 L469.7 627.6 L470.5 627.9 L471.4 624.3 L472.3 624.4 L473.2 624.7 L474.1 625.1 L475.0 624.6 L475.9 625.3 L476.7 625.4 L477.6 624.2 L478.5 624.6 L479.4 624.3 L480.3 624.6 L481.2 624.4 L482.1 624.6 L482.9 624.9 L483.8 624.9 L484.7 624.7 L485.6 624.6 L486.5 624.6 L487.4 624.6 L488.3 624.8 L489.1 624.6 L490.0 624.7 L490.9 624.2 L491.8 624.8 L492.7 625.1 L493.6 624.6 L494.4 624.2 L495.3 625.0 L496.2 624.5 L497.1 623.7 L498.0 624.5 L498.9 624.8 L499.8 624.7 L500.6 625.0 L501.5 624.8 L502.4 624.6 L503.3 624.0 L504.2 624.3 L505.1 624.6 L506.0 624.8 L506.8 624.3 L507.7 624.4 L508.6 624.7 L509.5 624.0 L510.4 624.0 L511.3 624.5 L512.2 624.7 L513.0 624.5 L513.9 623.9 L514.8 624.6 L515.7 624.2 L516.6 624.8 L517.5 624.6 L518.4 624.7 L519.2 624.8 L520.1 624.4 L521.0 624.8 L521.9 625.0 L522.8 624.7 L523.7 625.0 L524.6 624.4 L525.4 624.9 L526.3 624.7 L527.2 624.3 L528.1 624.6 L529.0 624.4 L529.9 624.4 L530.7 624.6 L531.6 624.9 L532.5 624.5 L533.4 624.6 L534.3 624.2 L535.2 624.6 L536.1 624.9 L536.9 624.8 L537.8 624.7 L538.7 624.4 L539.6 624.3 L540.5 624.6 L541.4 624.2 L542.3 624.2 L543.1 624.9 L544.0 624.3 L544.9 625.1 L545.8 624.2 L546.7 624.7 L547.6 624.2 L548.5 624.6 L549.3 624.3 L550.2 624.6 L551.1 624.6 L552.0 624.5 L552.9 624.7 L553.8 625.0 L554.7 624.4 L555.5 624.9 L556.4 624.6 L557.3 624.6 L558.2 625.2 L559.1 624.0 L560.0 624.4 L560.9 624.1 L561.7 624.5 L562.6 624.5 L563.5 625.7 L564.4 624.7 L565.3 625.1 L566.2 633.3 L567.0 632.7 L567.9 632.9 L568.8 633.1 L569.7 632.6 L570.6 632.5 L571.5 632.5 L572.4 631.8 L573.2 631.9 L574.1 632.2 L575.0 632.1 L575.9 631.6 L576.8 631.7 L577.7 631.7 L578.6 631.6 L579.4 631.7 L580.3 631.5 L581.2 631.4 L582.1 630.8 L583.0 630.8 L583.9 631.2 L584.8 630.5 L585.6 631.0 L586.5 630.6 L587.4 630.5 L588.3 630.8 L589.2 630.3 L590.1 630.2 L591.0 630.1 L591.8 630.3 L592.7 631.0 L593.6 629.4 L594.5 630.0 L595.4 629.8 L596.3 630.1 L597.1 629.6 L598.0 628.9 L598.9 629.9 L599.8 629.1 L600.7 629.3 L601.6 628.8 L602.5 628.8 L603.3 628.9 L604.2 629.2 L605.1 629.1 L606.0 628.6 L606.9 628.8 L607.8 628.5 L608.7 628.5 L609.5 628.4 L610.4 628.5 L611.3 628.0 L612.2 628.1 L613.1 628.1 L614.0 628.0 L614.9 627.6 L615.7 628.3 L616.6 627.5 L617.5 627.8 L618.4 627.5 L619.3 627.7 L620.2 626.6 L621.1 627.8 L621.9 627.0 L622.8 613.5 L623.7 627.0 L624.6 627.5 L625.5 626.9 L626.4 626.3 L627.3 626.4 L628.1 626.9 L629.0 626.0 L629.9 626.2 L630.8 626.1 L631.7 626.7 L632.6 625.9 L633.4 626.3 L634.3 625.6 L635.2 622.8 L636.1 623.3 L637.0 623.2 L637.9 622.5 L638.8 623.2 L639.6 623.2 L640.5 622.8 L641.4 623.1 L642.3 623.1 L643.2 622.8 L644.1 622.8 L645.0 622.8 L645.8 622.9 L646.7 622.6 L647.6 623.0 L648.5 622.5 L649.4 623.0 L650.3 623.0 L651.2 622.7 L652.0 623.2 L652.9 623.6 L653.8 623.4 L654.7 622.6 L655.6 623.4 L656.5 623.1 L657.4 623.0 L658.2 622.8 L659.1 623.0 L660.0 623.4 L660.9 623.2 L661.8 622.9 L662.7 622.8 L663.6 622.9 L664.4 623.2 L665.3 623.5 L666.2 622.7 L667.1 623.0 L668.0 622.9 L668.9 622.8 L669.7 623.1 L670.6 623.2 L671.5 622.6 L672.4 622.7 L673.3 623.3 L674.2 623.1 L675.1 623.1 L675.9 622.8 L676.8 622.9 L677.7 623.1 L678.6 622.8 L679.5 622.7 L680.4 623.0 L681.3 623.3 L682.1 622.7 L683.0 623.3 L683.9 631.6 L684.8 630.9 L685.7 631.0 L686.6 630.8 L687.5 630.8 L688.3 630.6 L689.2 629.8 L690.1 629.6 L691.0 630.1 L691.9 629.7 L692.8 629.6 L693.7 629.4 L694.5 629.5 L695.4 628.5 L696.3 629.0 L697.2 628.2 L698.1 628.5 L699.0 628.5 L699.9 627.5 L700.7 627.8 L701.6 627.4 L702.5 627.2 L703.4 627.1 L704.3 624.2 L705.2 624.2 L706.0 624.7 L706.9 624.7 L707.8 624.3 L708.7 624.1 L709.6 625.2 L710.5 624.8 L711.4 624.6 L712.2 624.2 L713.1 624.3 L714.0 624.6 L714.9 624.2 L715.8 625.0 L716.7 624.5 L717.6 624.6 L718.4 624.2 L719.3 624.2 L720.2 624.3 L721.1 624.6 L722.0 624.4 L722.9 624.4 L723.8 624.6 L724.6 624.6 L725.5 624.9 L726.4 624.4 L727.3 624.2 L728.2 624.5 L729.1 624.9 L730.0 624.3 L730.8 624.5 L731.7 624.4 L732.6 624.6 L733.5 624.6 L734.4 624.3 L735.3 624.4 L736.1 624.8 L737.0 624.8 L737.9 624.8 L738.8 624.7 L739.7 624.4 L740.6 624.4 L741.5 624.8 L742.3 624.1 L743.2 624.5 L744.1 623.9 L745.0 624.4 L745.9 624.3 L746.8 624.1 L747.7 624.7 L748.5 624.3 L749.4 624.4 L750.3 624.4 L751.2 624.3 L752.1 624.9 L753.0 624.3 L753.9 624.5 L754.7 624.1 L755.6 624.4 L756.5 624.4 L757.4 624.4 L758.3 624.3 L759.2 624.5 L760.1 624.9 L760.9 624.5 L761.8 624.4 L762.7 624.4 L763.6 625.2 L764.5 625.0 L765.4 624.7 L766.3 624.7 L767.1 624.3 L768.0 624.4 L768.9 624.6 L769.8 624.5 L770.7 624.2 L771.6 624.3 L772.4 624.6 L773.3 621.1 L774.2 620.4 L775.1 621.0 L776.0 621.4 L776.9 620.8 L777.8 621.1 L778.6 620.6 L779.5 621.2 L780.4 620.7 L781.3 620.6 L782.2 620.9 L783.1 621.7 L784.0 620.8 L784.8 620.6 L785.7 621.1 L786.6 621.1 L787.5 621.5 L788.4 620.6 L789.3 620.5 L790.2 620.9 L791.0 621.1 L791.9 621.1 L792.8 621.3 L793.7 620.6 L794.6 620.7 L795.5 621.0 L796.4 621.2 L797.2 621.1 L798.1 620.9 L799.0 620.7 L799.9 621.3 L800.8 621.3 L801.7 621.8 L802.6 620.9 L803.4 621.5 L804.3 620.6 L805.2 620.8 L806.1 620.8 L807.0 620.9 L807.9 620.7 L808.7 620.8 L809.6 621.0 L810.5 620.9 L811.4 621.2 L812.3 621.0 L813.2 621.0 L814.1 621.4 L814.9 621.1 L815.8 621.0 L816.7 621.0 L817.6 621.0 L818.5 621.2 L819.4 620.8 L820.3 621.3 L821.1 621.5 L822.0 621.3 L822.9 620.8 L823.8 620.5 L824.7 620.9 L825.6 621.0 L826.5 621.2 L827.3 620.9 L828.2 620.9 L829.1 621.4 L830.0 620.8 L830.9 621.3 L831.8 621.3 L832.7 620.6 L833.5 621.1 L834.4 620.8 L835.3 620.7 L836.2 620.4 L837.1 620.5 L838.0 621.1 L838.9 620.9 L839.7 621.1 L840.6 620.7 L841.5 621.9 L842.4 621.9 L843.3 621.5 L844.2 621.5 L845.0 622.1 L845.9 622.0 L846.8 621.7 L847.7 622.0 L848.6 622.2 L849.5 622.5 L850.4 621.7 L851.2 622.2 L852.1 622.6 L853.0 622.0 L853.9 622.4 L854.8 618.5 L855.7 620.1 L856.6 619.7 L857.4 619.1 L858.3 619.9 L859.2 620.0 L860.1 620.0 L861.0 620.0 L861.9 619.7 L862.8 619.5 L863.6 619.6 L864.5 619.7 L865.4 619.8 L866.3 619.5 L867.2 619.7 L868.1 619.9 L869.0 619.8 L869.8 620.4 L870.7 620.3 L871.6 619.4 L872.5 619.5 L873.4 619.3 L874.3 619.3 L875.1 619.9 L876.0 619.4 L876.9 619.4 L877.8 619.6 L878.7 619.9 L879.6 619.6 L880.5 619.6 L881.3 620.0 L882.2 619.8 L883.1 619.8 L884.0 620.0 L884.9 619.4 L885.8 619.8 L886.7 619.5 L887.5 620.0 L888.4 619.9 L889.3 619.4 L890.2 620.1 L891.1 619.3 L892.0 620.0 L892.9 619.8 L893.7 619.4 L894.6 619.4 L895.5 619.6 L896.4 619.7 L897.3 619.5 L898.2 619.9 L899.1 619.3 L899.9 619.7 L900.8 619.7 L901.7 619.1 L902.6 619.8 L903.5 619.3 L904.4 619.0 L905.3 619.5 L906.1 619.6 L907.0 620.0 L907.9 619.5 L908.8 620.1 L909.7 620.1 L910.6 620.0 L911.4 620.1 L912.3 619.8 L913.2 619.5 L914.1 619.9 L915.0 620.0 L915.9 619.8 L916.8 619.6 L917.6 619.2 L918.5 619.9 L919.4 619.8 L920.3 619.3 L921.2 619.7 L922.1 619.9 L923.0 619.7 L923.8 619.9 L924.7 619.9 L925.6 619.3 L926.5 614.6 L927.4 623.2 L928.3 623.4 L929.2 623.5 L930.0 622.5 L930.9 623.1 L931.8 623.3 L932.7 623.5 L933.6 623.6 L934.5 622.8 L935.4 623.0 L936.2 622.8 L937.1 623.3 L938.0 622.7 L938.9 623.4 L939.8 623.4 L940.7 623.2 L941.6 622.4 L942.4 622.9 L943.3 623.3 L944.2 622.7 L945.1 623.0 L946.0 624.8 L946.9 625.1 L947.7 624.9 L948.6 624.9 L949.5 624.7 L950.4 624.8 L951.3 624.8 L952.2 625.0 L953.1 624.7 L953.9 625.1 L954.8 624.3 L955.7 625.1 L956.6 624.7 L957.5 625.1 L958.4 624.8 L959.3 625.0 L960.1 625.2 L961.0 624.6 L961.9 624.8 L962.8 624.7 L963.7 624.9 L964.6 624.3 L965.5 624.7 L966.3 624.7 L967.2 624.6 L968.1 624.7 L969.0 624.3 L969.9 625.2 L970.8 624.9 L971.7 625.3 L972.5 624.5 L973.4 624.4 L974.3 624.9 L975.2 624.3 L976.1 624.9 L977.0 624.6 L977.9 624.7 L978.7 624.9 L979.6 624.8 L980.5 625.3 L981.4 625.0 L982.3 624.4 L983.2 625.1 L984.0 624.4 L984.9 624.8 L985.8 624.4 L986.7 624.5 L987.6 625.2 L988.5 624.6 L989.4 624.6 L990.2 624.6 L991.1 624.7 L992.0 625.2 L992.9 620.5 L993.8 624.4 L994.7 625.0 L995.6 624.3 L996.4 624.7 L997.3 625.1 L998.2 624.8 L999.1 624.6 L1000.0 624.6 L1000.9 624.5 L1001.8 624.6 L1002.6 624.8 L1003.5 625.2 L1004.4 625.1 L1005.3 624.6 L1006.2 624.6 L1007.1 625.0 L1008.0 624.2 L1008.8 624.7 L1009.7 624.7 L1010.6 624.5 L1011.5 624.5 L1012.4 624.9 L1013.3 624.3 L1014.1 624.5 L1015.0 624.6 L1015.9 624.8 L1016.8 624.4 L1017.7 625.1 L1018.6 624.7 L1019.5 624.7 L1020.3 624.7 L1021.2 624.6 L1022.1 624.5 L1023.0 625.1 L1023.9 624.8 L1024.8 624.7 L1025.7 625.1 L1026.5 624.6 L1027.4 625.0 L1028.3 624.8 L1029.2 624.5 L1030.1 625.0 L1031.0 624.3 L1031.9 625.0 L1032.7 624.5 L1033.6 624.9 L1034.5 625.2 L1035.4 624.9 L1036.3 624.6 L1037.2 624.8 L1038.1 624.7 L1038.9 624.4 L1039.8 624.5 L1040.7 624.8 L1041.6 624.9 L1042.5 624.3 L1043.4 624.8 L1044.3 624.9 L1045.1 624.8 L1046.0 621.5 L1046.9 622.1 L1047.8 621.4 L1048.7 622.0 L1049.6 622.2 L1050.4 621.2 L1051.3 621.9 L1052.2 621.9 L1053.1 621.8 L1054.0 621.5 L1054.9 621.7 L1055.8 621.4 L1056.6 621.8 L1057.5 621.9 L1058.4 621.6 L1059.3 621.5 L1060.2 621.6 L1061.1 621.8 L1062.0 621.8 L1062.8 621.7 L1063.7 621.8 L1064.6 621.4 L1065.5 621.0 L1066.4 622.0 L1067.3 622.2 L1068.2 621.4 L1069.0 621.6 L1069.9 621.9 L1070.8 622.1 L1071.7 622.0 L1072.6 622.1 L1073.5 621.8 L1074.4 621.9 L1075.2 621.9 L1076.1 621.6 L1077.0 622.1 L1077.9 622.0 L1078.8 622.1 L1079.7 621.7 L1080.6 622.1 L1081.4 621.5 L1082.3 621.9 L1083.2 621.0 L1084.1 614.0 L1085.0 622.0 L1085.9 621.6 L1086.7 621.8 L1087.6 621.3 L1088.5 622.2 L1089.4 621.9 L1090.3 621.8 L1091.2 621.9 L1092.1 621.9 L1092.9 622.2 L1093.8 621.8 L1094.7 621.3 L1095.6 621.7 L1096.5 622.1 L1097.4 621.9 L1098.3 621.6 L1099.1 621.9 L1100.0 621.8 L1100.9 621.9 L1101.8 621.3 L1102.7 621.5 L1103.6 622.0 L1104.5 621.7 L1105.3 621.9 L1106.2 622.3 L1107.1 621.7 L1108.0 621.8 L1108.9 621.6 L1109.8 621.6 L1110.7 621.7 L1111.5 621.3 L1112.4 621.2 L1113.3 622.2 L1114.2 621.7 L1115.1 623.3 L1116.0 623.0 L1116.9 623.0 L1117.7 623.2 L1118.6 623.2 L1119.5 622.6 L1120.4 623.3 L1121.3 622.7 L1122.2 623.0 L1123.0 623.7 L1123.9 623.0 L1124.8 623.5 L1125.7 622.9 L1126.6 623.2 L1127.5 623.0 L1128.4 623.1 L1129.2 622.7 L1130.1 622.7 L1131.0 623.1 L1131.9 622.5 L1132.8 622.7 L1133.7 623.2 L1134.6 622.8 L1135.4 622.7 L1136.3 622.6 L1137.2 623.0 L1138.1 622.9 L1139.0 623.0 L1139.9 622.9 L1140.8 623.5 L1141.6 622.8 L1142.5 622.4 L1143.4 623.0 L1144.3 623.0 L1145.2 623.0 L1146.1 622.5 L1147.0 623.3 L1147.8 623.0 L1148.7 623.0 L1149.6 622.5 L1150.5 623.1 L1151.4 623.0 L1152.3 623.4 L1153.1 622.8 L1154.0 622.6 L1154.9 623.0 L1155.8 622.7 L1156.7 623.1 L1157.6 622.7 L1158.5 622.9 L1159.3 622.9 L1160.2 623.0 L1161.1 622.8 L1162.0 622.7 L1162.9 623.0 L1163.8 622.8 L1164.7 623.0 L1165.5 622.9 L1166.4 622.3 L1167.3 623.0 L1168.2 623.4 L1169.1 623.1 L1170.0 623.1 L1170.9 623.1 L1171.7 622.8 L1172.6 622.6 L1173.5 623.2 L1174.4 623.3 L1175.3 623.1 L1176.2 623.1 L1177.1 623.1 L1177.9 623.0 L1178.8 623.1 L1179.7 623.0 L1180.6 623.1 L1181.5 622.7 L1182.4 622.8 L1183.3 623.1 L1184.1 622.9 L1185.0 622.3 L1185.9 623.0 L1186.8 622.3 L1187.7 623.5 L1188.6 623.2 L1189.4 623.2 L1190.3 622.8 L1191.2 622.6 L1192.1 622.9 L1193.0 623.0 L1193.9 622.7 L1194.8 623.0 L1195.6 623.2 L1196.5 623.1 L1197.4 622.7 L1198.3 622.3 L1199.2 623.0 L1200.1 623.8 L1201.0 624.1 L1201.8 624.4 L1202.7 624.4 L1203.6 624.1 L1204.5 624.3 L1205.4 624.4 L1206.3 624.0 L1207.2 624.1 L1208.0 624.2 L1208.9 624.0 L1209.8 623.8 L1210.7 623.8 L1211.6 624.0 L1212.5 623.8 L1213.4 624.2 L1214.2 623.9 L1215.1 624.4 L1216.0 624.3 L1216.9 623.6 L1217.8 624.3 L1218.7 623.9 L1219.6 624.4 L1220.4 624.1 L1221.3 624.0 L1222.2 624.2 L1223.1 623.8 L1224.0 624.1 L1224.9 624.1 L1225.7 623.9 L1226.6 624.1 L1227.5 623.7 L1228.4 624.1 L1229.3 623.6 L1230.2 624.2 L1231.1 624.1 L1231.9 624.2 L1232.8 623.8 L1233.7 624.8 L1234.6 623.9 L1235.5 624.0 L1236.4 623.8 L1237.3 624.4 L1238.1 629.3 L1239.0 629.5 L1239.9 628.9 L1240.8 629.1 L1241.7 628.8 L1242.6 629.0 L1243.5 628.5 L1244.3 628.2 L1245.2 628.5 L1246.1 627.9 L1247.0 627.8 L1247.9 628.1 L1248.8 627.3 L1249.7 627.9 L1250.5 627.4 L1251.4 627.1 L1252.3 627.3 L1253.2 627.3 L1254.1 626.8 L1255.0 626.8 L1255.9 626.9 L1256.7 626.8 L1257.6 626.4 L1258.5 626.1 L1259.4 625.9 L1260.3 625.9 L1261.2 626.1 L1262.0 625.9 L1262.9 625.7 L1263.8 625.9 L1264.7 621.7 L1265.6 621.7 L1266.5 621.7 L1267.4 622.3 L1268.2 621.2 L1269.1 621.9 L1270.0 621.9 L1270.9 621.8 L1271.8 622.5 L1272.7 622.1 L1273.6 622.0 L1274.4 621.5 L1275.3 621.9 L1276.2 621.7 L1277.1 621.8 L1278.0 621.8 L1278.9 621.7 L1279.8 622.0 L1280.6 622.3 L1281.5 622.1 L1282.4 621.9 L1283.3 621.2 L1284.2 622.1 L1285.1 622.1 L1286.0 621.7 L1286.8 621.7 L1287.7 622.0 L1288.6 621.6 L1289.5 622.0 L1290.4 621.5 L1291.3 621.5 L1292.1 621.8 L1293.0 621.4 L1293.9 621.8 L1294.8 621.9 L1295.7 621.4 L1296.6 622.1 L1297.5 621.6 L1298.3 622.0 L1299.2 621.9 L1300.1 621.7 L1301.0 621.6 L1301.9 621.3 L1302.8 621.6 L1303.7 621.6 L1304.5 622.3 L1305.4 622.1 L1306.3 621.4 L1307.2 622.0 L1308.1 621.9 L1309.0 621.7 L1309.9 621.9 L1310.7 622.0 L1311.6 621.6 L1312.5 621.7 L1313.4 621.8 L1314.3 621.5 L1315.2 621.9 L1316.1 621.8 L1316.9 621.6 L1317.8 621.6 L1318.7 621.9 L1319.6 622.0 L1320.5 621.9 L1321.4 621.6 L1322.3 622.0 L1323.1 621.8 L1324.0 622.0 L1324.9 622.1 L1325.8 621.5 L1326.7 621.8 L1327.6 621.6 L1328.4 621.6 L1329.3 622.4 L1330.2 622.1 L1331.1 621.3 L1332.0 629.0 L1332.9 628.5 L1333.8 628.8 L1334.6 628.2 L1335.5 627.9 L1336.4 627.8 L1337.3 627.7 L1338.2 627.3 L1339.1 627.0 L1340.0 626.8 L1340.8 626.8 L1341.7 626.1 L1342.6 626.2 L1343.5 626.0 L1343.5 796 L370.5 796 Z" fill="url(#rg)"/>
<path d="M370.5 623.6 L371.4 624.2 L372.3 624.1 L373.2 623.9 L374.0 624.0 L374.9 624.1 L375.8 624.4 L376.7 623.6 L377.6 624.1 L378.5 623.8 L379.4 623.8 L380.2 624.2 L381.1 624.1 L382.0 626.7 L382.9 626.9 L383.8 627.1 L384.7 626.6 L385.6 627.2 L386.4 627.0 L387.3 627.0 L388.2 627.1 L389.1 627.5 L390.0 627.0 L390.9 626.9 L391.7 627.5 L392.6 626.8 L393.5 626.8 L394.4 626.6 L395.3 627.3 L396.2 627.1 L397.1 627.1 L397.9 627.0 L398.8 627.0 L399.7 626.8 L400.6 626.8 L401.5 627.1 L402.4 627.0 L403.3 627.5 L404.1 626.8 L405.0 626.8 L405.9 626.7 L406.8 627.4 L407.7 626.6 L408.6 627.2 L409.5 627.4 L410.3 626.9 L411.2 627.2 L412.1 626.4 L413.0 626.9 L413.9 626.5 L414.8 627.0 L415.7 627.0 L416.5 626.8 L417.4 627.3 L418.3 621.0 L419.2 632.4 L420.1 626.8 L421.0 626.6 L421.9 626.9 L422.7 627.6 L423.6 626.8 L424.5 627.1 L425.4 626.8 L426.3 627.2 L427.2 627.1 L428.0 626.9 L428.9 626.5 L429.8 626.8 L430.7 627.3 L431.6 626.9 L432.5 627.2 L433.4 626.8 L434.2 626.4 L435.1 627.1 L436.0 627.1 L436.9 626.8 L437.8 626.9 L438.7 627.1 L439.6 626.8 L440.4 627.1 L441.3 626.9 L442.2 626.3 L443.1 626.9 L444.0 626.8 L444.9 626.7 L445.8 627.8 L446.6 627.5 L447.5 627.9 L448.4 628.0 L449.3 627.7 L450.2 627.2 L451.1 627.5 L452.0 628.0 L452.8 627.6 L453.7 627.5 L454.6 627.7 L455.5 627.8 L456.4 627.8 L457.3 627.9 L458.1 627.4 L459.0 627.6 L459.9 627.6 L460.8 627.7 L461.7 627.1 L462.6 627.6 L463.5 627.3 L464.3 628.1 L465.2 628.2 L466.1 628.2 L467.0 627.9 L467.9 627.6 L468.8 628.0 L469.7 627.6 L470.5 627.9 L471.4 624.3 L472.3 624.4 L473.2 624.7 L474.1 625.1 L475.0 624.6 L475.9 625.3 L476.7 625.4 L477.6 624.2 L478.5 624.6 L479.4 624.3 L480.3 624.6 L481.2 624.4 L482.1 624.6 L482.9 624.9 L483.8 624.9 L484.7 624.7 L485.6 624.6 L486.5 624.6 L487.4 624.6 L488.3 624.8 L489.1 624.6 L490.0 624.7 L490.9 624.2 L491.8 624.8 L492.7 625.1 L493.6 624.6 L494.4 624.2 L495.3 625.0 L496.2 624.5 L497.1 623.7 L498.0 624.5 L498.9 624.8 L499.8 624.7 L500.6 625.0 L501.5 624.8 L502.4 624.6 L503.3 624.0 L504.2 624.3 L505.1 624.6 L506.0 624.8 L506.8 624.3 L507.7 624.4 L508.6 624.7 L509.5 624.0 L510.4 624.0 L511.3 624.5 L512.2 624.7 L513.0 624.5 L513.9 623.9 L514.8 624.6 L515.7 624.2 L516.6 624.8 L517.5 624.6 L518.4 624.7 L519.2 624.8 L520.1 624.4 L521.0 624.8 L521.9 625.0 L522.8 624.7 L523.7 625.0 L524.6 624.4 L525.4 624.9 L526.3 624.7 L527.2 624.3 L528.1 624.6 L529.0 624.4 L529.9 624.4 L530.7 624.6 L531.6 624.9 L532.5 624.5 L533.4 624.6 L534.3 624.2 L535.2 624.6 L536.1 624.9 L536.9 624.8 L537.8 624.7 L538.7 624.4 L539.6 624.3 L540.5 624.6 L541.4 624.2 L542.3 624.2 L543.1 624.9 L544.0 624.3 L544.9 625.1 L545.8 624.2 L546.7 624.7 L547.6 624.2 L548.5 624.6 L549.3 624.3 L550.2 624.6 L551.1 624.6 L552.0 624.5 L552.9 624.7 L553.8 625.0 L554.7 624.4 L555.5 624.9 L556.4 624.6 L557.3 624.6 L558.2 625.2 L559.1 624.0 L560.0 624.4 L560.9 624.1 L561.7 624.5 L562.6 624.5 L563.5 625.7 L564.4 624.7 L565.3 625.1 L566.2 633.3 L567.0 632.7 L567.9 632.9 L568.8 633.1 L569.7 632.6 L570.6 632.5 L571.5 632.5 L572.4 631.8 L573.2 631.9 L574.1 632.2 L575.0 632.1 L575.9 631.6 L576.8 631.7 L577.7 631.7 L578.6 631.6 L579.4 631.7 L580.3 631.5 L581.2 631.4 L582.1 630.8 L583.0 630.8 L583.9 631.2 L584.8 630.5 L585.6 631.0 L586.5 630.6 L587.4 630.5 L588.3 630.8 L589.2 630.3 L590.1 630.2 L591.0 630.1 L591.8 630.3 L592.7 631.0 L593.6 629.4 L594.5 630.0 L595.4 629.8 L596.3 630.1 L597.1 629.6 L598.0 628.9 L598.9 629.9 L599.8 629.1 L600.7 629.3 L601.6 628.8 L602.5 628.8 L603.3 628.9 L604.2 629.2 L605.1 629.1 L606.0 628.6 L606.9 628.8 L607.8 628.5 L608.7 628.5 L609.5 628.4 L610.4 628.5 L611.3 628.0 L612.2 628.1 L613.1 628.1 L614.0 628.0 L614.9 627.6 L615.7 628.3 L616.6 627.5 L617.5 627.8 L618.4 627.5 L619.3 627.7 L620.2 626.6 L621.1 627.8 L621.9 627.0 L622.8 613.5 L623.7 627.0 L624.6 627.5 L625.5 626.9 L626.4 626.3 L627.3 626.4 L628.1 626.9 L629.0 626.0 L629.9 626.2 L630.8 626.1 L631.7 626.7 L632.6 625.9 L633.4 626.3 L634.3 625.6 L635.2 622.8 L636.1 623.3 L637.0 623.2 L637.9 622.5 L638.8 623.2 L639.6 623.2 L640.5 622.8 L641.4 623.1 L642.3 623.1 L643.2 622.8 L644.1 622.8 L645.0 622.8 L645.8 622.9 L646.7 622.6 L647.6 623.0 L648.5 622.5 L649.4 623.0 L650.3 623.0 L651.2 622.7 L652.0 623.2 L652.9 623.6 L653.8 623.4 L654.7 622.6 L655.6 623.4 L656.5 623.1 L657.4 623.0 L658.2 622.8 L659.1 623.0 L660.0 623.4 L660.9 623.2 L661.8 622.9 L662.7 622.8 L663.6 622.9 L664.4 623.2 L665.3 623.5 L666.2 622.7 L667.1 623.0 L668.0 622.9 L668.9 622.8 L669.7 623.1 L670.6 623.2 L671.5 622.6 L672.4 622.7 L673.3 623.3 L674.2 623.1 L675.1 623.1 L675.9 622.8 L676.8 622.9 L677.7 623.1 L678.6 622.8 L679.5 622.7 L680.4 623.0 L681.3 623.3 L682.1 622.7 L683.0 623.3 L683.9 631.6 L684.8 630.9 L685.7 631.0 L686.6 630.8 L687.5 630.8 L688.3 630.6 L689.2 629.8 L690.1 629.6 L691.0 630.1 L691.9 629.7 L692.8 629.6 L693.7 629.4 L694.5 629.5 L695.4 628.5 L696.3 629.0 L697.2 628.2 L698.1 628.5 L699.0 628.5 L699.9 627.5 L700.7 627.8 L701.6 627.4 L702.5 627.2 L703.4 627.1 L704.3 624.2 L705.2 624.2 L706.0 624.7 L706.9 624.7 L707.8 624.3 L708.7 624.1 L709.6 625.2 L710.5 624.8 L711.4 624.6 L712.2 624.2 L713.1 624.3 L714.0 624.6 L714.9 624.2 L715.8 625.0 L716.7 624.5 L717.6 624.6 L718.4 624.2 L719.3 624.2 L720.2 624.3 L721.1 624.6 L722.0 624.4 L722.9 624.4 L723.8 624.6 L724.6 624.6 L725.5 624.9 L726.4 624.4 L727.3 624.2 L728.2 624.5 L729.1 624.9 L730.0 624.3 L730.8 624.5 L731.7 624.4 L732.6 624.6 L733.5 624.6 L734.4 624.3 L735.3 624.4 L736.1 624.8 L737.0 624.8 L737.9 624.8 L738.8 624.7 L739.7 624.4 L740.6 624.4 L741.5 624.8 L742.3 624.1 L743.2 624.5 L744.1 623.9 L745.0 624.4 L745.9 624.3 L746.8 624.1 L747.7 624.7 L748.5 624.3 L749.4 624.4 L750.3 624.4 L751.2 624.3 L752.1 624.9 L753.0 624.3 L753.9 624.5 L754.7 624.1 L755.6 624.4 L756.5 624.4 L757.4 624.4 L758.3 624.3 L759.2 624.5 L760.1 624.9 L760.9 624.5 L761.8 624.4 L762.7 624.4 L763.6 625.2 L764.5 625.0 L765.4 624.7 L766.3 624.7 L767.1 624.3 L768.0 624.4 L768.9 624.6 L769.8 624.5 L770.7 624.2 L771.6 624.3 L772.4 624.6 L773.3 621.1 L774.2 620.4 L775.1 621.0 L776.0 621.4 L776.9 620.8 L777.8 621.1 L778.6 620.6 L779.5 621.2 L780.4 620.7 L781.3 620.6 L782.2 620.9 L783.1 621.7 L784.0 620.8 L784.8 620.6 L785.7 621.1 L786.6 621.1 L787.5 621.5 L788.4 620.6 L789.3 620.5 L790.2 620.9 L791.0 621.1 L791.9 621.1 L792.8 621.3 L793.7 620.6 L794.6 620.7 L795.5 621.0 L796.4 621.2 L797.2 621.1 L798.1 620.9 L799.0 620.7 L799.9 621.3 L800.8 621.3 L801.7 621.8 L802.6 620.9 L803.4 621.5 L804.3 620.6 L805.2 620.8 L806.1 620.8 L807.0 620.9 L807.9 620.7 L808.7 620.8 L809.6 621.0 L810.5 620.9 L811.4 621.2 L812.3 621.0 L813.2 621.0 L814.1 621.4 L814.9 621.1 L815.8 621.0 L816.7 621.0 L817.6 621.0 L818.5 621.2 L819.4 620.8 L820.3 621.3 L821.1 621.5 L822.0 621.3 L822.9 620.8 L823.8 620.5 L824.7 620.9 L825.6 621.0 L826.5 621.2 L827.3 620.9 L828.2 620.9 L829.1 621.4 L830.0 620.8 L830.9 621.3 L831.8 621.3 L832.7 620.6 L833.5 621.1 L834.4 620.8 L835.3 620.7 L836.2 620.4 L837.1 620.5 L838.0 621.1 L838.9 620.9 L839.7 621.1 L840.6 620.7 L841.5 621.9 L842.4 621.9 L843.3 621.5 L844.2 621.5 L845.0 622.1 L845.9 622.0 L846.8 621.7 L847.7 622.0 L848.6 622.2 L849.5 622.5 L850.4 621.7 L851.2 622.2 L852.1 622.6 L853.0 622.0 L853.9 622.4 L854.8 618.5 L855.7 620.1 L856.6 619.7 L857.4 619.1 L858.3 619.9 L859.2 620.0 L860.1 620.0 L861.0 620.0 L861.9 619.7 L862.8 619.5 L863.6 619.6 L864.5 619.7 L865.4 619.8 L866.3 619.5 L867.2 619.7 L868.1 619.9 L869.0 619.8 L869.8 620.4 L870.7 620.3 L871.6 619.4 L872.5 619.5 L873.4 619.3 L874.3 619.3 L875.1 619.9 L876.0 619.4 L876.9 619.4 L877.8 619.6 L878.7 619.9 L879.6 619.6 L880.5 619.6 L881.3 620.0 L882.2 619.8 L883.1 619.8 L884.0 620.0 L884.9 619.4 L885.8 619.8 L886.7 619.5 L887.5 620.0 L888.4 619.9 L889.3 619.4 L890.2 620.1 L891.1 619.3 L892.0 620.0 L892.9 619.8 L893.7 619.4 L894.6 619.4 L895.5 619.6 L896.4 619.7 L897.3 619.5 L898.2 619.9 L899.1 619.3 L899.9 619.7 L900.8 619.7 L901.7 619.1 L902.6 619.8 L903.5 619.3 L904.4 619.0 L905.3 619.5 L906.1 619.6 L907.0 620.0 L907.9 619.5 L908.8 620.1 L909.7 620.1 L910.6 620.0 L911.4 620.1 L912.3 619.8 L913.2 619.5 L914.1 619.9 L915.0 620.0 L915.9 619.8 L916.8 619.6 L917.6 619.2 L918.5 619.9 L919.4 619.8 L920.3 619.3 L921.2 619.7 L922.1 619.9 L923.0 619.7 L923.8 619.9 L924.7 619.9 L925.6 619.3 L926.5 614.6 L927.4 623.2 L928.3 623.4 L929.2 623.5 L930.0 622.5 L930.9 623.1 L931.8 623.3 L932.7 623.5 L933.6 623.6 L934.5 622.8 L935.4 623.0 L936.2 622.8 L937.1 623.3 L938.0 622.7 L938.9 623.4 L939.8 623.4 L940.7 623.2 L941.6 622.4 L942.4 622.9 L943.3 623.3 L944.2 622.7 L945.1 623.0 L946.0 624.8 L946.9 625.1 L947.7 624.9 L948.6 624.9 L949.5 624.7 L950.4 624.8 L951.3 624.8 L952.2 625.0 L953.1 624.7 L953.9 625.1 L954.8 624.3 L955.7 625.1 L956.6 624.7 L957.5 625.1 L958.4 624.8 L959.3 625.0 L960.1 625.2 L961.0 624.6 L961.9 624.8 L962.8 624.7 L963.7 624.9 L964.6 624.3 L965.5 624.7 L966.3 624.7 L967.2 624.6 L968.1 624.7 L969.0 624.3 L969.9 625.2 L970.8 624.9 L971.7 625.3 L972.5 624.5 L973.4 624.4 L974.3 624.9 L975.2 624.3 L976.1 624.9 L977.0 624.6 L977.9 624.7 L978.7 624.9 L979.6 624.8 L980.5 625.3 L981.4 625.0 L982.3 624.4 L983.2 625.1 L984.0 624.4 L984.9 624.8 L985.8 624.4 L986.7 624.5 L987.6 625.2 L988.5 624.6 L989.4 624.6 L990.2 624.6 L991.1 624.7 L992.0 625.2 L992.9 620.5 L993.8 624.4 L994.7 625.0 L995.6 624.3 L996.4 624.7 L997.3 625.1 L998.2 624.8 L999.1 624.6 L1000.0 624.6 L1000.9 624.5 L1001.8 624.6 L1002.6 624.8 L1003.5 625.2 L1004.4 625.1 L1005.3 624.6 L1006.2 624.6 L1007.1 625.0 L1008.0 624.2 L1008.8 624.7 L1009.7 624.7 L1010.6 624.5 L1011.5 624.5 L1012.4 624.9 L1013.3 624.3 L1014.1 624.5 L1015.0 624.6 L1015.9 624.8 L1016.8 624.4 L1017.7 625.1 L1018.6 624.7 L1019.5 624.7 L1020.3 624.7 L1021.2 624.6 L1022.1 624.5 L1023.0 625.1 L1023.9 624.8 L1024.8 624.7 L1025.7 625.1 L1026.5 624.6 L1027.4 625.0 L1028.3 624.8 L1029.2 624.5 L1030.1 625.0 L1031.0 624.3 L1031.9 625.0 L1032.7 624.5 L1033.6 624.9 L1034.5 625.2 L1035.4 624.9 L1036.3 624.6 L1037.2 624.8 L1038.1 624.7 L1038.9 624.4 L1039.8 624.5 L1040.7 624.8 L1041.6 624.9 L1042.5 624.3 L1043.4 624.8 L1044.3 624.9 L1045.1 624.8 L1046.0 621.5 L1046.9 622.1 L1047.8 621.4 L1048.7 622.0 L1049.6 622.2 L1050.4 621.2 L1051.3 621.9 L1052.2 621.9 L1053.1 621.8 L1054.0 621.5 L1054.9 621.7 L1055.8 621.4 L1056.6 621.8 L1057.5 621.9 L1058.4 621.6 L1059.3 621.5 L1060.2 621.6 L1061.1 621.8 L1062.0 621.8 L1062.8 621.7 L1063.7 621.8 L1064.6 621.4 L1065.5 621.0 L1066.4 622.0 L1067.3 622.2 L1068.2 621.4 L1069.0 621.6 L1069.9 621.9 L1070.8 622.1 L1071.7 622.0 L1072.6 622.1 L1073.5 621.8 L1074.4 621.9 L1075.2 621.9 L1076.1 621.6 L1077.0 622.1 L1077.9 622.0 L1078.8 622.1 L1079.7 621.7 L1080.6 622.1 L1081.4 621.5 L1082.3 621.9 L1083.2 621.0 L1084.1 614.0 L1085.0 622.0 L1085.9 621.6 L1086.7 621.8 L1087.6 621.3 L1088.5 622.2 L1089.4 621.9 L1090.3 621.8 L1091.2 621.9 L1092.1 621.9 L1092.9 622.2 L1093.8 621.8 L1094.7 621.3 L1095.6 621.7 L1096.5 622.1 L1097.4 621.9 L1098.3 621.6 L1099.1 621.9 L1100.0 621.8 L1100.9 621.9 L1101.8 621.3 L1102.7 621.5 L1103.6 622.0 L1104.5 621.7 L1105.3 621.9 L1106.2 622.3 L1107.1 621.7 L1108.0 621.8 L1108.9 621.6 L1109.8 621.6 L1110.7 621.7 L1111.5 621.3 L1112.4 621.2 L1113.3 622.2 L1114.2 621.7 L1115.1 623.3 L1116.0 623.0 L1116.9 623.0 L1117.7 623.2 L1118.6 623.2 L1119.5 622.6 L1120.4 623.3 L1121.3 622.7 L1122.2 623.0 L1123.0 623.7 L1123.9 623.0 L1124.8 623.5 L1125.7 622.9 L1126.6 623.2 L1127.5 623.0 L1128.4 623.1 L1129.2 622.7 L1130.1 622.7 L1131.0 623.1 L1131.9 622.5 L1132.8 622.7 L1133.7 623.2 L1134.6 622.8 L1135.4 622.7 L1136.3 622.6 L1137.2 623.0 L1138.1 622.9 L1139.0 623.0 L1139.9 622.9 L1140.8 623.5 L1141.6 622.8 L1142.5 622.4 L1143.4 623.0 L1144.3 623.0 L1145.2 623.0 L1146.1 622.5 L1147.0 623.3 L1147.8 623.0 L1148.7 623.0 L1149.6 622.5 L1150.5 623.1 L1151.4 623.0 L1152.3 623.4 L1153.1 622.8 L1154.0 622.6 L1154.9 623.0 L1155.8 622.7 L1156.7 623.1 L1157.6 622.7 L1158.5 622.9 L1159.3 622.9 L1160.2 623.0 L1161.1 622.8 L1162.0 622.7 L1162.9 623.0 L1163.8 622.8 L1164.7 623.0 L1165.5 622.9 L1166.4 622.3 L1167.3 623.0 L1168.2 623.4 L1169.1 623.1 L1170.0 623.1 L1170.9 623.1 L1171.7 622.8 L1172.6 622.6 L1173.5 623.2 L1174.4 623.3 L1175.3 623.1 L1176.2 623.1 L1177.1 623.1 L1177.9 623.0 L1178.8 623.1 L1179.7 623.0 L1180.6 623.1 L1181.5 622.7 L1182.4 622.8 L1183.3 623.1 L1184.1 622.9 L1185.0 622.3 L1185.9 623.0 L1186.8 622.3 L1187.7 623.5 L1188.6 623.2 L1189.4 623.2 L1190.3 622.8 L1191.2 622.6 L1192.1 622.9 L1193.0 623.0 L1193.9 622.7 L1194.8 623.0 L1195.6 623.2 L1196.5 623.1 L1197.4 622.7 L1198.3 622.3 L1199.2 623.0 L1200.1 623.8 L1201.0 624.1 L1201.8 624.4 L1202.7 624.4 L1203.6 624.1 L1204.5 624.3 L1205.4 624.4 L1206.3 624.0 L1207.2 624.1 L1208.0 624.2 L1208.9 624.0 L1209.8 623.8 L1210.7 623.8 L1211.6 624.0 L1212.5 623.8 L1213.4 624.2 L1214.2 623.9 L1215.1 624.4 L1216.0 624.3 L1216.9 623.6 L1217.8 624.3 L1218.7 623.9 L1219.6 624.4 L1220.4 624.1 L1221.3 624.0 L1222.2 624.2 L1223.1 623.8 L1224.0 624.1 L1224.9 624.1 L1225.7 623.9 L1226.6 624.1 L1227.5 623.7 L1228.4 624.1 L1229.3 623.6 L1230.2 624.2 L1231.1 624.1 L1231.9 624.2 L1232.8 623.8 L1233.7 624.8 L1234.6 623.9 L1235.5 624.0 L1236.4 623.8 L1237.3 624.4 L1238.1 629.3 L1239.0 629.5 L1239.9 628.9 L1240.8 629.1 L1241.7 628.8 L1242.6 629.0 L1243.5 628.5 L1244.3 628.2 L1245.2 628.5 L1246.1 627.9 L1247.0 627.8 L1247.9 628.1 L1248.8 627.3 L1249.7 627.9 L1250.5 627.4 L1251.4 627.1 L1252.3 627.3 L1253.2 627.3 L1254.1 626.8 L1255.0 626.8 L1255.9 626.9 L1256.7 626.8 L1257.6 626.4 L1258.5 626.1 L1259.4 625.9 L1260.3 625.9 L1261.2 626.1 L1262.0 625.9 L1262.9 625.7 L1263.8 625.9 L1264.7 621.7 L1265.6 621.7 L1266.5 621.7 L1267.4 622.3 L1268.2 621.2 L1269.1 621.9 L1270.0 621.9 L1270.9 621.8 L1271.8 622.5 L1272.7 622.1 L1273.6 622.0 L1274.4 621.5 L1275.3 621.9 L1276.2 621.7 L1277.1 621.8 L1278.0 621.8 L1278.9 621.7 L1279.8 622.0 L1280.6 622.3 L1281.5 622.1 L1282.4 621.9 L1283.3 621.2 L1284.2 622.1 L1285.1 622.1 L1286.0 621.7 L1286.8 621.7 L1287.7 622.0 L1288.6 621.6 L1289.5 622.0 L1290.4 621.5 L1291.3 621.5 L1292.1 621.8 L1293.0 621.4 L1293.9 621.8 L1294.8 621.9 L1295.7 621.4 L1296.6 622.1 L1297.5 621.6 L1298.3 622.0 L1299.2 621.9 L1300.1 621.7 L1301.0 621.6 L1301.9 621.3 L1302.8 621.6 L1303.7 621.6 L1304.5 622.3 L1305.4 622.1 L1306.3 621.4 L1307.2 622.0 L1308.1 621.9 L1309.0 621.7 L1309.9 621.9 L1310.7 622.0 L1311.6 621.6 L1312.5 621.7 L1313.4 621.8 L1314.3 621.5 L1315.2 621.9 L1316.1 621.8 L1316.9 621.6 L1317.8 621.6 L1318.7 621.9 L1319.6 622.0 L1320.5 621.9 L1321.4 621.6 L1322.3 622.0 L1323.1 621.8 L1324.0 622.0 L1324.9 622.1 L1325.8 621.5 L1326.7 621.8 L1327.6 621.6 L1328.4 621.6 L1329.3 622.4 L1330.2 622.1 L1331.1 621.3 L1332.0 629.0 L1332.9 628.5 L1333.8 628.8 L1334.6 628.2 L1335.5 627.9 L1336.4 627.8 L1337.3 627.7 L1338.2 627.3 L1339.1 627.0 L1340.0 626.8 L1340.8 626.8 L1341.7 626.1 L1342.6 626.2 L1343.5 626.0" fill="none" stroke="#1782fa" stroke-width="2.2" stroke-linejoin="round"/>
<g font-family='"Liberation Sans", sans-serif' font-size="12" fill="#7f7f7f">
<text x="358.9" y="800.70" text-anchor="end">0</text><text x="358.9" y="771.97" text-anchor="end">5</text><text x="358.9" y="743.25" text-anchor="end" textLength="12.4" lengthAdjust="spacing">10</text><text x="358.9" y="714.52" text-anchor="end" textLength="12.4" lengthAdjust="spacing">15</text><text x="358.9" y="685.80" text-anchor="end" textLength="14.1" lengthAdjust="spacing">20</text><text x="358.9" y="657.07" text-anchor="end" textLength="14.1" lengthAdjust="spacing">25</text><text x="358.9" y="628.35" text-anchor="end" textLength="14.1" lengthAdjust="spacing">30</text><text x="358.9" y="599.62" text-anchor="end" textLength="14.1" lengthAdjust="spacing">35</text>
<text x="373.40" y="814.40" transform="rotate(-50 373.40 814.40)" text-anchor="end" textLength="51.3" lengthAdjust="spacing">22:04:56</text><text x="396.23" y="814.40" transform="rotate(-50 396.23 814.40)" text-anchor="end" textLength="51.3" lengthAdjust="spacing">22:39:04</text><text x="419.06" y="814.40" transform="rotate(-50 419.06 814.40)" text-anchor="end" textLength="51.3" lengthAdjust="spacing">23:06:04</text><text x="441.89" y="814.40" transform="rotate(-50 441.89 814.40)" text-anchor="end" textLength="51.3" lengthAdjust="spacing">23:33:04</text><text x="464.72" y="814.40" transform="rotate(-50 464.72 814.40)" text-anchor="end" textLength="51.3" lengthAdjust="spacing">00:00:05</text><text x="487.55" y="814.40" transform="rotate(-50 487.55 814.40)" text-anchor="end" textLength="51.3" lengthAdjust="spacing">00:27:05</text><text x="510.38" y="814.40" transform="rotate(-50 510.38 814.40)" text-anchor="end" textLength="51.3" lengthAdjust="spacing">00:54:05</text><text x="533.21" y="814.40" transform="rotate(-50 533.21 814.40)" text-anchor="end" textLength="48.9" lengthAdjust="spacing">01:20:04</text><text x="556.04" y="814.40" transform="rotate(-50 556.04 814.40)" text-anchor="end" textLength="48.9" lengthAdjust="spacing">01:46:04</text><text x="578.87" y="814.40" transform="rotate(-50 578.87 814.40)" text-anchor="end" textLength="48.9" lengthAdjust="spacing">02:13:05</text><text x="601.70" y="814.40" transform="rotate(-50 601.70 814.40)" text-anchor="end" textLength="51.3" lengthAdjust="spacing">02:38:04</text><text x="624.53" y="814.40" transform="rotate(-50 624.53 814.40)" text-anchor="end" textLength="51.3" lengthAdjust="spacing">03:05:05</text><text x="647.36" y="814.40" transform="rotate(-50 647.36 814.40)" text-anchor="end" textLength="48.9" lengthAdjust="spacing">03:31:05</text><text x="670.19" y="814.40" transform="rotate(-50 670.19 814.40)" text-anchor="end" textLength="48.9" lengthAdjust="spacing">03:52:51</text><text x="693.02" y="814.40" transform="rotate(-50 693.02 814.40)" text-anchor="end" textLength="48.9" lengthAdjust="spacing">04:17:08</text><text x="715.85" y="814.40" transform="rotate(-50 715.85 814.40)" text-anchor="end" textLength="48.9" lengthAdjust="spacing">15:39:08</text><text x="738.68" y="814.40" transform="rotate(-50 738.68 814.40)" text-anchor="end" textLength="48.9" lengthAdjust="spacing">16:06:08</text><text x="761.51" y="814.40" transform="rotate(-50 761.51 814.40)" text-anchor="end" textLength="48.9" lengthAdjust="spacing">16:33:08</text><text x="784.34" y="814.40" transform="rotate(-50 784.34 814.40)" text-anchor="end" textLength="48.9" lengthAdjust="spacing">17:00:08</text><text x="807.17" y="814.40" transform="rotate(-50 807.17 814.40)" text-anchor="end" textLength="48.9" lengthAdjust="spacing">17:27:08</text><text x="830.00" y="814.40" transform="rotate(-50 830.00 814.40)" text-anchor="end" textLength="48.9" lengthAdjust="spacing">17:54:08</text><text x="852.83" y="814.40" transform="rotate(-50 852.83 814.40)" text-anchor="end" textLength="46.5" lengthAdjust="spacing">18:21:07</text><text x="875.66" y="814.40" transform="rotate(-50 875.66 814.40)" text-anchor="end" textLength="48.9" lengthAdjust="spacing">18:48:08</text><text x="898.49" y="814.40" transform="rotate(-50 898.49 814.40)" text-anchor="end" textLength="46.5" lengthAdjust="spacing">19:15:07</text><text x="921.32" y="814.40" transform="rotate(-50 921.32 814.40)" text-anchor="end" textLength="48.9" lengthAdjust="spacing">19:42:07</text><text x="944.15" y="814.40" transform="rotate(-50 944.15 814.40)" text-anchor="end" textLength="51.3" lengthAdjust="spacing">20:09:08</text><text x="966.98" y="814.40" transform="rotate(-50 966.98 814.40)" text-anchor="end" textLength="51.3" lengthAdjust="spacing">20:36:07</text><text x="989.81" y="814.40" transform="rotate(-50 989.81 814.40)" text-anchor="end" textLength="48.9" lengthAdjust="spacing">21:03:07</text><text x="1012.64" y="814.40" transform="rotate(-50 1012.64 814.40)" text-anchor="end" textLength="48.9" lengthAdjust="spacing">21:30:08</text><text x="1035.47" y="814.40" transform="rotate(-50 1035.47 814.40)" text-anchor="end" textLength="48.9" lengthAdjust="spacing">21:57:07</text><text x="1058.30" y="814.40" transform="rotate(-50 1058.30 814.40)" text-anchor="end" textLength="51.3" lengthAdjust="spacing">22:24:07</text><text x="1081.13" y="814.40" transform="rotate(-50 1081.13 814.40)" text-anchor="end" textLength="48.9" lengthAdjust="spacing">22:51:07</text><text x="1103.96" y="814.40" transform="rotate(-50 1103.96 814.40)" text-anchor="end" textLength="48.9" lengthAdjust="spacing">23:18:08</text><text x="1126.79" y="814.40" transform="rotate(-50 1126.79 814.40)" text-anchor="end" textLength="51.3" lengthAdjust="spacing">23:45:08</text><text x="1149.62" y="814.40" transform="rotate(-50 1149.62 814.40)" text-anchor="end" textLength="48.9" lengthAdjust="spacing">00:12:08</text><text x="1172.45" y="814.40" transform="rotate(-50 1172.45 814.40)" text-anchor="end" textLength="51.3" lengthAdjust="spacing">00:39:07</text><text x="1195.28" y="814.40" transform="rotate(-50 1195.28 814.40)" text-anchor="end" textLength="48.9" lengthAdjust="spacing">01:06:07</text><text x="1218.11" y="814.40" transform="rotate(-50 1218.11 814.40)" text-anchor="end" textLength="48.9" lengthAdjust="spacing">01:33:07</text><text x="1240.94" y="814.40" transform="rotate(-50 1240.94 814.40)" text-anchor="end" textLength="51.3" lengthAdjust="spacing">02:00:08</text><text x="1263.77" y="814.40" transform="rotate(-50 1263.77 814.40)" text-anchor="end" textLength="51.3" lengthAdjust="spacing">02:27:08</text><text x="1286.60" y="814.40" transform="rotate(-50 1286.60 814.40)" text-anchor="end" textLength="51.3" lengthAdjust="spacing">02:54:07</text><text x="1309.43" y="814.40" transform="rotate(-50 1309.43 814.40)" text-anchor="end" textLength="48.9" lengthAdjust="spacing">03:21:07</text><text x="1332.26" y="814.40" transform="rotate(-50 1332.26 814.40)" text-anchor="end" textLength="51.3" lengthAdjust="spacing">03:48:08</text>
</g>
<g font-family='"Liberation Sans", sans-serif'>
<text x="452.6" y="31.1" font-size="13.75" fill="#e6e6e6" stroke="#e6e6e6" stroke-width="0.18">127.0.0.1/66uptime/server-monitor/3&amp;start_date=2024-01-18&amp;end_date=2024-01-31</text>
<text x="69.4" y="98.5" font-size="23.5" fill="#ffffff" stroke="#ffffff" stroke-width="0" letter-spacing="-0.25">66uptime</text>
<text x="53.9" y="158.6" font-size="16" fill="#d1dbe7" stroke="#d1dbe7" stroke-width="0.18">Dashboard</text>
<text x="53.9" y="217.85" font-size="16" fill="#d1dbe7" stroke="#d1dbe7" stroke-width="0.18" textLength="63.2" lengthAdjust="spacing">Monitors</text><text x="53.9" y="277.05" font-size="16" fill="#d1dbe7" stroke="#d1dbe7" stroke-width="0.18" textLength="100.1" lengthAdjust="spacing">DNS monitors</text><text x="53.9" y="336.25" font-size="16" fill="#d1dbe7" stroke="#d1dbe7" stroke-width="0.18" textLength="113.8" lengthAdjust="spacing">Server monitors</text><text x="53.9" y="395.45" font-size="16" fill="#d1dbe7" stroke="#d1dbe7" stroke-width="0.18" textLength="80.0" lengthAdjust="spacing">Heartbeats</text><text x="53.9" y="454.65" font-size="16" fill="#d1dbe7" stroke="#d1dbe7" stroke-width="0.18" textLength="106.9" lengthAdjust="spacing">Domain names</text><text x="53.9" y="513.85" font-size="16" fill="#d1dbe7" stroke="#d1dbe7" stroke-width="0.18" textLength="94.5" lengthAdjust="spacing">Status pages</text><text x="53.9" y="573.0500000000001" font-size="16" fill="#d1dbe7" stroke="#d1dbe7" stroke-width="0.18" textLength="57.8" lengthAdjust="spacing">Projects</text><text x="53.9" y="632.25" font-size="16" fill="#d1dbe7" stroke="#d1dbe7" stroke-width="0.18" textLength="121.3" lengthAdjust="spacing">Custom domains</text><text x="53.9" y="691.45" font-size="16" fill="#d1dbe7" stroke="#d1dbe7" stroke-width="0.18" textLength="149.3" lengthAdjust="spacing">Notification handlers</text><text x="53.9" y="750.65" font-size="16" fill="#d1dbe7" stroke="#d1dbe7" stroke-width="0.18" textLength="38.0" lengthAdjust="spacing">Tools</text>
<text x="80.2" y="873.3" font-size="16.2" fill="#d1dbe7" stroke="#d1dbe7" stroke-width="0.18">AltumCode</text>
<text x="79.6" y="893.6" font-size="13" fill="#d1dbe7" stroke="#d1dbe7" stroke-width="0.18">hey@altum.dev</text>
<text x="1053.2" y="114" font-size="14.5" fill="#ffffff" stroke="#ffffff" stroke-width="0.18">18 January, 2024 - 31 January, 2024</text>
<text x="362.2" y="194.6" font-size="16" fill="#d1dbe7" stroke="#d1dbe7" stroke-width="0.18">CPU usage</text>
<text x="1215.6" y="186.8" font-size="13.7" fill="#7c8596" stroke="#7c8596" stroke-width="0.18">DO-Premium-Intel</text>
<text x="1215.6" y="210.9" font-size="13.1" fill="#7c8596" stroke="#7c8596" stroke-width="0.18">1 cores @ 2,494 MHz</text>
<text x="362.2" y="572.8" font-size="16" fill="#d1dbe7" stroke="#d1dbe7" stroke-width="0.18">RAM usage</text>
<text x="1344.8" y="575.7" font-size="15.85" fill="#7c8596" stroke="#7c8596" stroke-width="0.18" text-anchor="end">583 MB / 1,971 MB</text>
</g>
</svg>
</div>
</body></html>
